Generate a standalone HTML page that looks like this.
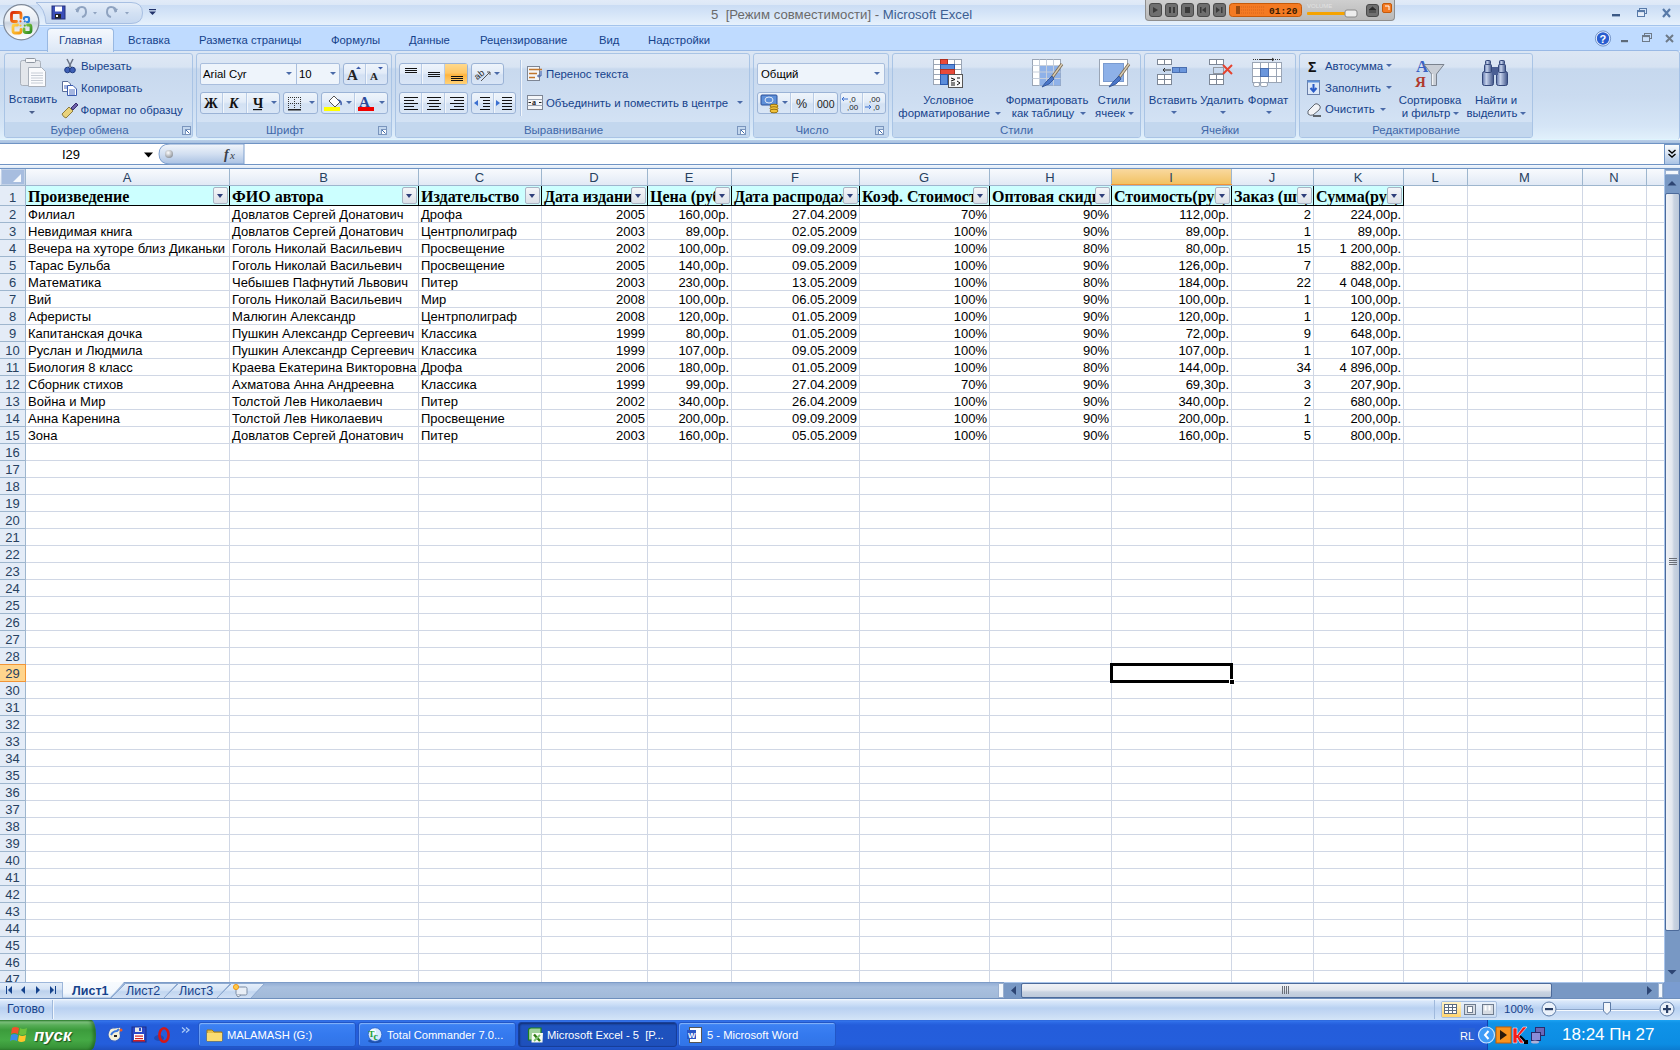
<!DOCTYPE html><html><head><meta charset="utf-8"><style>
html,body{margin:0;padding:0;width:1680px;height:1050px;overflow:hidden;background:#fff;}
body{position:relative;font-family:"Liberation Sans",sans-serif;}
div{box-sizing:border-box;}
svg{position:absolute;overflow:visible;}
</style></head><body>
<div style="position:absolute;left:0px;top:0px;width:1680px;height:26px;background:linear-gradient(#E2EBF8 0px,#DDE8F7 4.5px,#CADCF4 5px,#D3E3F7 12px,#E6F1FC 25px);"></div>
<div style="position:absolute;left:0px;top:25px;width:1680px;height:1px;background:#A4C4EC;"></div>
<div style="position:absolute;left:0px;top:26px;width:1680px;height:1px;background:#D5E7FD;"></div>
<div style="position:absolute;left:711px;top:7.5px;font:normal 13.2px/14px 'Liberation Sans', sans-serif;color:#6A6A6A;white-space:nowrap;">5&nbsp;&nbsp;[Режим совместимости]&nbsp;-&nbsp;<span style="color:#3D5F92">Microsoft Excel</span></div>
<div style="position:absolute;left:0px;top:27px;width:1680px;height:24px;background:#BFDBFF;"></div>
<div style="position:absolute;left:59px;top:32.5px;font:normal 11.3px/14px 'Liberation Sans', sans-serif;color:#15428B;white-space:nowrap;">Главная</div>
<div style="position:absolute;left:128px;top:32.5px;font:normal 11.3px/14px 'Liberation Sans', sans-serif;color:#15428B;white-space:nowrap;">Вставка</div>
<div style="position:absolute;left:199px;top:32.5px;font:normal 11.3px/14px 'Liberation Sans', sans-serif;color:#15428B;white-space:nowrap;">Разметка страницы</div>
<div style="position:absolute;left:331px;top:32.5px;font:normal 11.3px/14px 'Liberation Sans', sans-serif;color:#15428B;white-space:nowrap;">Формулы</div>
<div style="position:absolute;left:409px;top:32.5px;font:normal 11.3px/14px 'Liberation Sans', sans-serif;color:#15428B;white-space:nowrap;">Данные</div>
<div style="position:absolute;left:480px;top:32.5px;font:normal 11.3px/14px 'Liberation Sans', sans-serif;color:#15428B;white-space:nowrap;">Рецензирование</div>
<div style="position:absolute;left:599px;top:32.5px;font:normal 11.3px/14px 'Liberation Sans', sans-serif;color:#15428B;white-space:nowrap;">Вид</div>
<div style="position:absolute;left:648px;top:32.5px;font:normal 11.3px/14px 'Liberation Sans', sans-serif;color:#15428B;white-space:nowrap;">Надстройки</div>
<div style="position:absolute;left:0px;top:50px;width:1680px;height:90px;background:linear-gradient(#DBE6F4 0px,#D6E2F2 16px,#C6D8EE 18px,#CADBF0 45px,#D5E5F6 75px,#E2F1FC 89px);border-top:1px solid #99B9E5;border-right:1px solid #A6C2E6;border-radius:0 4px 4px 0;"></div>
<div style="position:absolute;left:0px;top:139px;width:1678px;height:1px;background:#DFF5FE;"></div>
<div style="position:absolute;left:47px;top:28px;width:67px;height:24px;background:linear-gradient(#F4F8FD,#E6EEF9 60%,#DCE7F5);border:1px solid #98B8E2;border-bottom:none;border-radius:4px 4px 0 0;"></div>
<div style="position:absolute;left:59px;top:32.5px;font:normal 11.3px/14px 'Liberation Sans', sans-serif;color:#15428B;white-space:nowrap;">Главная</div>
<div style="position:absolute;left:4px;top:53px;width:189px;height:85px;background:linear-gradient(#DFE8F5 0px,#D8E4F3 13px,#C8D9EE 15px,#CDDDF1 45px,#D3E2F4 68px);border:1px solid #A9C4E5;border-radius:3px;"></div>
<div style="position:absolute;left:5px;top:122px;width:187px;height:15px;background:#C3D7EE;border-radius:0 0 2px 2px;"></div>
<div style="position:absolute;left:4px;top:124px;width:171px;text-align:center;font:11.5px/13px 'Liberation Sans', sans-serif;color:#3F67A9;white-space:nowrap">Буфер обмена</div>
<div style="position:absolute;left:196px;top:53px;width:196px;height:85px;background:linear-gradient(#DFE8F5 0px,#D8E4F3 13px,#C8D9EE 15px,#CDDDF1 45px,#D3E2F4 68px);border:1px solid #A9C4E5;border-radius:3px;"></div>
<div style="position:absolute;left:197px;top:122px;width:194px;height:15px;background:#C3D7EE;border-radius:0 0 2px 2px;"></div>
<div style="position:absolute;left:196px;top:124px;width:178px;text-align:center;font:11.5px/13px 'Liberation Sans', sans-serif;color:#3F67A9;white-space:nowrap">Шрифт</div>
<div style="position:absolute;left:395px;top:53px;width:355px;height:85px;background:linear-gradient(#DFE8F5 0px,#D8E4F3 13px,#C8D9EE 15px,#CDDDF1 45px,#D3E2F4 68px);border:1px solid #A9C4E5;border-radius:3px;"></div>
<div style="position:absolute;left:396px;top:122px;width:353px;height:15px;background:#C3D7EE;border-radius:0 0 2px 2px;"></div>
<div style="position:absolute;left:395px;top:124px;width:337px;text-align:center;font:11.5px/13px 'Liberation Sans', sans-serif;color:#3F67A9;white-space:nowrap">Выравнивание</div>
<div style="position:absolute;left:753px;top:53px;width:136px;height:85px;background:linear-gradient(#DFE8F5 0px,#D8E4F3 13px,#C8D9EE 15px,#CDDDF1 45px,#D3E2F4 68px);border:1px solid #A9C4E5;border-radius:3px;"></div>
<div style="position:absolute;left:754px;top:122px;width:134px;height:15px;background:#C3D7EE;border-radius:0 0 2px 2px;"></div>
<div style="position:absolute;left:753px;top:124px;width:118px;text-align:center;font:11.5px/13px 'Liberation Sans', sans-serif;color:#3F67A9;white-space:nowrap">Число</div>
<div style="position:absolute;left:892px;top:53px;width:249px;height:85px;background:linear-gradient(#DFE8F5 0px,#D8E4F3 13px,#C8D9EE 15px,#CDDDF1 45px,#D3E2F4 68px);border:1px solid #A9C4E5;border-radius:3px;"></div>
<div style="position:absolute;left:893px;top:122px;width:247px;height:15px;background:#C3D7EE;border-radius:0 0 2px 2px;"></div>
<div style="position:absolute;left:892px;top:124px;width:249px;text-align:center;font:11.5px/13px 'Liberation Sans', sans-serif;color:#3F67A9;white-space:nowrap">Стили</div>
<div style="position:absolute;left:1144px;top:53px;width:152px;height:85px;background:linear-gradient(#DFE8F5 0px,#D8E4F3 13px,#C8D9EE 15px,#CDDDF1 45px,#D3E2F4 68px);border:1px solid #A9C4E5;border-radius:3px;"></div>
<div style="position:absolute;left:1145px;top:122px;width:150px;height:15px;background:#C3D7EE;border-radius:0 0 2px 2px;"></div>
<div style="position:absolute;left:1144px;top:124px;width:152px;text-align:center;font:11.5px/13px 'Liberation Sans', sans-serif;color:#3F67A9;white-space:nowrap">Ячейки</div>
<div style="position:absolute;left:1299px;top:53px;width:234px;height:85px;background:linear-gradient(#DFE8F5 0px,#D8E4F3 13px,#C8D9EE 15px,#CDDDF1 45px,#D3E2F4 68px);border:1px solid #A9C4E5;border-radius:3px;"></div>
<div style="position:absolute;left:1300px;top:122px;width:232px;height:15px;background:#C3D7EE;border-radius:0 0 2px 2px;"></div>
<div style="position:absolute;left:1299px;top:124px;width:234px;text-align:center;font:11.5px/13px 'Liberation Sans', sans-serif;color:#3F67A9;white-space:nowrap">Редактирование</div>
<svg style="left:18px;top:57px" width="30" height="32"><rect x="2.5" y="3.5" width="20" height="25" rx="2" fill="#E3E6EB" stroke="#A9B0BA"/><rect x="7.5" y="1.5" width="10" height="4" rx="1" fill="#F7F8FA" stroke="#8E96A1"/><path d="M10.5 10.5 H23.5 L27.5 14.5 V29.5 H10.5Z" fill="#FAFBFD" stroke="#A9B0BA"/><path d="M13 16 H25 M13 18.5 H25 M13 21 H25 M13 23.5 H25 M13 26 H25" stroke="#C6CCD5"/></svg>
<div style="position:absolute;left:-117px;top:94.35px;width:300px;text-align:center;font:normal 11.4px/11.4px 'Liberation Sans', sans-serif;color:#15428B;white-space:nowrap">Вставить</div>
<div style="position:absolute;left:29.0px;top:110.5px;width:0;height:0;border-left:3.0px solid transparent;border-right:3.0px solid transparent;border-top:3.5px solid #4A5F8C"></div>
<svg style="left:63px;top:58px" width="14" height="16"><path d="M4 1 L8 9 M10 1 L6 9" stroke="#6A7486" stroke-width="1.5"/><circle cx="4.5" cy="12" r="2.8" fill="#3D5FB5" stroke="#1E3A80"/><circle cx="9.5" cy="12" r="2.8" fill="#3D5FB5" stroke="#1E3A80"/></svg>
<div style="position:absolute;left:81px;top:61.35px;font:normal 11.4px/11.4px 'Liberation Sans', sans-serif;color:#15428B;white-space:nowrap">Вырезать</div>
<svg style="left:61px;top:80px" width="18" height="16"><path d="M1.5 1.5 H7 L9.5 4 V11.5 H1.5Z" fill="#fff" stroke="#5B6E99"/><path d="M6.5 5.5 H12 L15.5 9 V15.5 H6.5Z" fill="#fff" stroke="#3A5BB0"/><path d="M8 10 H14 M8 12 H14 M8 14 H14 M3 6 H6 M3 8 H6" stroke="#4A6CC0"/></svg>
<div style="position:absolute;left:81px;top:83.35px;font:normal 11.4px/11.4px 'Liberation Sans', sans-serif;color:#15428B;white-space:nowrap">Копировать</div>
<svg style="left:61px;top:102px" width="18" height="17"><path d="M1 12 L8 5 L12 9 L5 16 Q2 15 1 12Z" fill="#E9D27A" stroke="#8A7A40"/><path d="M10 6 L15 1 L17 3 L12 8Z" fill="#6B5FA8" stroke="#3A2F70"/></svg>
<div style="position:absolute;left:80.5px;top:104.85px;font:normal 11.4px/11.4px 'Liberation Sans', sans-serif;color:#15428B;white-space:nowrap">Формат по образцу</div>
<svg style="left:182px;top:126px" width="10" height="10"><rect x="0.5" y="0.5" width="8" height="8" fill="none" stroke="#7A95BD"/><rect x="3.5" y="3.5" width="5" height="5" fill="#fff" stroke="#7A95BD"/><path d="M4 4 L7.5 7.5" stroke="#3E6AAA"/></svg>
<div style="position:absolute;left:200px;top:63px;width:140px;height:22px;background:#EEF4FB;border:1px solid #A9BEDD;border-radius:2px"></div>
<div style="position:absolute;left:296px;top:64px;width:1px;height:20px;background:#A9BEDD"></div>
<div style="position:absolute;left:203px;top:69.35px;font:normal 11.4px/11.4px 'Liberation Sans', sans-serif;color:#000;white-space:nowrap">Arial Cyr</div>
<div style="position:absolute;left:299px;top:69.35px;font:normal 11.4px/11.4px 'Liberation Sans', sans-serif;color:#000;white-space:nowrap">10</div>
<div style="position:absolute;left:286.0px;top:72.0px;width:0;height:0;border-left:3.5px solid transparent;border-right:3.5px solid transparent;border-top:3.5px solid #4A6AA8"></div>
<div style="position:absolute;left:330.0px;top:72.0px;width:0;height:0;border-left:3.5px solid transparent;border-right:3.5px solid transparent;border-top:3.5px solid #4A6AA8"></div>
<div style="position:absolute;left:343px;top:63px;width:45px;height:22px;background:linear-gradient(#EEF4FB 0px,#E3ECF8 9px,#D3E1F3 11px,#DAE6F6 21px);border:1px solid #9BB3D6;border-radius:3px"></div>
<div style="position:absolute;left:365px;top:64px;width:1px;height:20px;background:#B9CCE6"></div>
<div style="position:absolute;left:366px;top:64px;width:1px;height:20px;background:#F3F7FC"></div>
<svg style="left:343px;top:63px" width="45" height="22"><text x="4" y="17" font-family="Liberation Serif" font-size="15" font-weight="bold" fill="#222">A</text><path d="M13 6 L15.5 3.5 L18 6Z" fill="#3B5BA8"/><text x="27" y="17" font-family="Liberation Serif" font-size="11" font-weight="bold" fill="#222">A</text><path d="M35 4 L37.5 6.5 L40 4Z" fill="#3B5BA8"/></svg>
<div style="position:absolute;left:200px;top:92px;width:80px;height:22px;background:linear-gradient(#EEF4FB 0px,#E3ECF8 9px,#D3E1F3 11px,#DAE6F6 21px);border:1px solid #9BB3D6;border-radius:3px"></div>
<div style="position:absolute;left:222px;top:93px;width:1px;height:20px;background:#B9CCE6"></div>
<div style="position:absolute;left:223px;top:93px;width:1px;height:20px;background:#F3F7FC"></div>
<div style="position:absolute;left:246px;top:93px;width:1px;height:20px;background:#B9CCE6"></div>
<div style="position:absolute;left:247px;top:93px;width:1px;height:20px;background:#F3F7FC"></div>
<svg style="left:200px;top:92px" width="80" height="22"><text x="4" y="16" font-family="Liberation Serif" font-size="14" font-weight="bold" fill="#111">Ж</text><text x="29" y="16" font-family="Liberation Serif" font-size="14" font-weight="bold" font-style="italic" fill="#111">К</text><text x="53" y="16" font-family="Liberation Serif" font-size="14" font-weight="bold" fill="#111">Ч</text><rect x="53" y="17" width="9" height="1.2" fill="#111"/></svg>
<div style="position:absolute;left:270.5px;top:101.0px;width:0;height:0;border-left:3.0px solid transparent;border-right:3.0px solid transparent;border-top:3.5px solid #4A6AA8"></div>
<div style="position:absolute;left:283px;top:92px;width:35px;height:22px;background:linear-gradient(#EEF4FB 0px,#E3ECF8 9px,#D3E1F3 11px,#DAE6F6 21px);border:1px solid #9BB3D6;border-radius:3px"></div>
<svg style="left:283px;top:92px" width="35" height="22"><path d="M5.5 5 V17 M11.5 5 V17 M17.5 5 V17 M5 5.5 H18 M5 11.5 H18" stroke="#333" stroke-dasharray="1 1" fill="none"/><rect x="5" y="17" width="13" height="1.5" fill="#222"/></svg>
<div style="position:absolute;left:308.5px;top:101.0px;width:0;height:0;border-left:3.0px solid transparent;border-right:3.0px solid transparent;border-top:3.5px solid #4A6AA8"></div>
<div style="position:absolute;left:321px;top:92px;width:67px;height:22px;background:linear-gradient(#EEF4FB 0px,#E3ECF8 9px,#D3E1F3 11px,#DAE6F6 21px);border:1px solid #9BB3D6;border-radius:3px"></div>
<div style="position:absolute;left:354px;top:93px;width:1px;height:20px;background:#B9CCE6"></div>
<div style="position:absolute;left:355px;top:93px;width:1px;height:20px;background:#F3F7FC"></div>
<svg style="left:321px;top:92px" width="67" height="22"><path d="M8 9 L13 4 L19 10 L14 15Z" fill="#fff" stroke="#555"/><path d="M17 8 Q21 9 20 13" stroke="#3B5BA8" stroke-width="1.5" fill="none"/><rect x="3" y="15" width="16" height="4" fill="#FFFF00"/><text x="38" y="14.5" font-family="Liberation Serif" font-size="15" font-weight="bold" fill="#2B4A9A">A</text><rect x="37" y="15" width="16" height="4" fill="#F00000"/></svg>
<div style="position:absolute;left:345.5px;top:101.0px;width:0;height:0;border-left:3.0px solid transparent;border-right:3.0px solid transparent;border-top:3.5px solid #4A6AA8"></div>
<div style="position:absolute;left:378.5px;top:101.0px;width:0;height:0;border-left:3.0px solid transparent;border-right:3.0px solid transparent;border-top:3.5px solid #4A6AA8"></div>
<svg style="left:378px;top:126px" width="10" height="10"><rect x="0.5" y="0.5" width="8" height="8" fill="none" stroke="#7A95BD"/><rect x="3.5" y="3.5" width="5" height="5" fill="#fff" stroke="#7A95BD"/><path d="M4 4 L7.5 7.5" stroke="#3E6AAA"/></svg>
<div style="position:absolute;left:399px;top:63px;width:69px;height:22px;background:linear-gradient(#EEF4FB 0px,#E3ECF8 9px,#D3E1F3 11px,#DAE6F6 21px);border:1px solid #9BB3D6;border-radius:3px"></div>
<div style="position:absolute;left:421px;top:64px;width:1px;height:20px;background:#B9CCE6"></div>
<div style="position:absolute;left:422px;top:64px;width:1px;height:20px;background:#F3F7FC"></div>
<div style="position:absolute;left:444px;top:64px;width:1px;height:20px;background:#B9CCE6"></div>
<div style="position:absolute;left:445px;top:64px;width:1px;height:20px;background:#F3F7FC"></div>
<div style="position:absolute;left:445px;top:64px;width:22px;height:20px;background:linear-gradient(#FFD98C 0px,#FFC766 9px,#FFB43D 11px,#FFD27A 20px)"></div>
<svg style="left:399px;top:63px" width="70" height="22"><path d="M6 5.5 H18 M6 7.5 H18 M6 9.5 H18" stroke="#111"/><path d="M29 9.5 H41 M29 11.5 H41 M29 13.5 H41" stroke="#111"/><path d="M52 13.5 H64 M52 15.5 H64 M52 17.5 H64" stroke="#111"/></svg>
<div style="position:absolute;left:471px;top:63px;width:33px;height:22px;background:linear-gradient(#EEF4FB 0px,#E3ECF8 9px,#D3E1F3 11px,#DAE6F6 21px);border:1px solid #9BB3D6;border-radius:3px"></div>
<svg style="left:471px;top:63px" width="33" height="22"><text x="3" y="14" font-family="Liberation Sans" font-size="9" fill="#222" transform="rotate(-40 9 11)">ab</text><path d="M10 18 L19 9 M16 9 H19 V12" stroke="#555" fill="none"/></svg>
<div style="position:absolute;left:493.5px;top:72.0px;width:0;height:0;border-left:3.0px solid transparent;border-right:3.0px solid transparent;border-top:3.5px solid #4A6AA8"></div>
<div style="position:absolute;left:399px;top:92px;width:69px;height:22px;background:linear-gradient(#EEF4FB 0px,#E3ECF8 9px,#D3E1F3 11px,#DAE6F6 21px);border:1px solid #9BB3D6;border-radius:3px"></div>
<div style="position:absolute;left:421px;top:93px;width:1px;height:20px;background:#B9CCE6"></div>
<div style="position:absolute;left:422px;top:93px;width:1px;height:20px;background:#F3F7FC"></div>
<div style="position:absolute;left:444px;top:93px;width:1px;height:20px;background:#B9CCE6"></div>
<div style="position:absolute;left:445px;top:93px;width:1px;height:20px;background:#F3F7FC"></div>
<svg style="left:399px;top:92px" width="70" height="22"><path d="M5 5.5 H19 M5 8.5 H15 M5 11.5 H19 M5 14.5 H15 M5 17.5 H19" stroke="#111" stroke-width="1.2"/><path d="M28 5.5 H42 M30 8.5 H40 M28 11.5 H42 M30 14.5 H40 M28 17.5 H42" stroke="#111" stroke-width="1.2"/><path d="M51 5.5 H65 M55 8.5 H65 M51 11.5 H65 M55 14.5 H65 M51 17.5 H65" stroke="#111" stroke-width="1.2"/></svg>
<div style="position:absolute;left:471px;top:92px;width:45px;height:22px;background:linear-gradient(#EEF4FB 0px,#E3ECF8 9px,#D3E1F3 11px,#DAE6F6 21px);border:1px solid #9BB3D6;border-radius:3px"></div>
<div style="position:absolute;left:493px;top:93px;width:1px;height:20px;background:#B9CCE6"></div>
<div style="position:absolute;left:494px;top:93px;width:1px;height:20px;background:#F3F7FC"></div>
<svg style="left:471px;top:92px" width="45" height="22"><path d="M9 5.5 H19 M12 8.5 H19 M12 11.5 H19 M12 14.5 H19 M9 17.5 H19" stroke="#111" stroke-width="1.2"/><path d="M3 11 L7 8 L7 14Z" fill="#3B6FD0"/><path d="M31 5.5 H41 M31 8.5 H41 M31 11.5 H41 M31 14.5 H41 M31 17.5 H41" stroke="#111" stroke-width="1.2"/><path d="M29 11 L25 8 L25 14Z" fill="#3B6FD0"/></svg>
<div style="position:absolute;left:520px;top:60px;width:1px;height:56px;background:#AFC4E2"></div>
<div style="position:absolute;left:521px;top:60px;width:1px;height:56px;background:#F2F6FB"></div>
<svg style="left:526px;top:65px" width="18" height="18"><rect x="1.5" y="1.5" width="12" height="14" fill="#F4F6F9" stroke="#7D8594"/><path d="M3 4.5 H16 M3 8.5 H11 M3 12.5 H9" stroke="#C0762E" stroke-width="1.3"/><path d="M15 6 V11 H12 M13 9.5 L11.5 11 L13 12.5" stroke="#3B5BA8" fill="none"/></svg>
<div style="position:absolute;left:546px;top:69.35px;font:normal 11.4px/11.4px 'Liberation Sans', sans-serif;color:#15428B;white-space:nowrap">Перенос текста</div>
<svg style="left:526px;top:94px" width="18" height="18"><rect x="1.5" y="1.5" width="15" height="14" fill="#F4F6F9" stroke="#7D8594"/><path d="M1.5 5.5 H16.5 M1.5 11.5 H16.5" stroke="#9BA4B3"/><text x="6" y="11" font-family="Liberation Serif" font-size="8" font-weight="bold" fill="#222">a</text><path d="M2.5 8.5 H5 M13 8.5 H15.5" stroke="#222"/></svg>
<div style="position:absolute;left:546px;top:98.35px;font:normal 11.4px/11.4px 'Liberation Sans', sans-serif;color:#15428B;white-space:nowrap">Объединить и поместить в центре</div>
<div style="position:absolute;left:736.5px;top:101.0px;width:0;height:0;border-left:3.0px solid transparent;border-right:3.0px solid transparent;border-top:3.5px solid #4A6AA8"></div>
<svg style="left:737px;top:126px" width="10" height="10"><rect x="0.5" y="0.5" width="8" height="8" fill="none" stroke="#7A95BD"/><rect x="3.5" y="3.5" width="5" height="5" fill="#fff" stroke="#7A95BD"/><path d="M4 4 L7.5 7.5" stroke="#3E6AAA"/></svg>
<div style="position:absolute;left:757px;top:63px;width:128px;height:22px;background:#EEF4FB;border:1px solid #A9BEDD;border-radius:2px"></div>
<div style="position:absolute;left:761px;top:69.35px;font:normal 11.4px/11.4px 'Liberation Sans', sans-serif;color:#000;white-space:nowrap">Общий</div>
<div style="position:absolute;left:874.0px;top:72.0px;width:0;height:0;border-left:3.5px solid transparent;border-right:3.5px solid transparent;border-top:3.5px solid #4A6AA8"></div>
<div style="position:absolute;left:757px;top:92px;width:81px;height:22px;background:linear-gradient(#EEF4FB 0px,#E3ECF8 9px,#D3E1F3 11px,#DAE6F6 21px);border:1px solid #9BB3D6;border-radius:3px"></div>
<div style="position:absolute;left:790px;top:93px;width:1px;height:20px;background:#B9CCE6"></div>
<div style="position:absolute;left:791px;top:93px;width:1px;height:20px;background:#F3F7FC"></div>
<div style="position:absolute;left:813px;top:93px;width:1px;height:20px;background:#B9CCE6"></div>
<div style="position:absolute;left:814px;top:93px;width:1px;height:20px;background:#F3F7FC"></div>
<svg style="left:757px;top:92px" width="82" height="22"><rect x="4" y="3" width="16" height="10" rx="1" fill="#5D8FD8" stroke="#2B4F98"/><ellipse cx="12" cy="8" rx="4" ry="3" fill="none" stroke="#DDE8F8"/><ellipse cx="17" cy="14" rx="4" ry="1.8" fill="#F2C23A" stroke="#9A7410"/><ellipse cx="17" cy="16.5" rx="4" ry="1.8" fill="#F2C23A" stroke="#9A7410"/><ellipse cx="17" cy="19" rx="4" ry="1.8" fill="#F2C23A" stroke="#9A7410"/><text x="39" y="16" font-family="Liberation Sans" font-size="12.5" fill="#222">%</text><text x="60" y="16" font-family="Liberation Sans" font-size="10.5" fill="#222">000</text></svg>
<div style="position:absolute;left:781.5px;top:101.0px;width:0;height:0;border-left:3.0px solid transparent;border-right:3.0px solid transparent;border-top:3.5px solid #4A6AA8"></div>
<div style="position:absolute;left:840px;top:92px;width:46px;height:22px;background:linear-gradient(#EEF4FB 0px,#E3ECF8 9px,#D3E1F3 11px,#DAE6F6 21px);border:1px solid #9BB3D6;border-radius:3px"></div>
<div style="position:absolute;left:862px;top:93px;width:1px;height:20px;background:#B9CCE6"></div>
<div style="position:absolute;left:863px;top:93px;width:1px;height:20px;background:#F3F7FC"></div>
<svg style="left:840px;top:92px" width="46" height="22"><text x="9" y="10" font-family="Liberation Sans" font-size="8" fill="#222">,0</text><text x="7" y="18" font-family="Liberation Sans" font-size="8" fill="#222">,00</text><path d="M2 7 H8 M4 5 L2 7 L4 9" stroke="#3B6FD0" fill="none"/><text x="29" y="10" font-family="Liberation Sans" font-size="8" fill="#222">,00</text><text x="33" y="18" font-family="Liberation Sans" font-size="8" fill="#222">,0</text><path d="M25 15 H31 M29 13 L31 15 L29 17" stroke="#3B6FD0" fill="none"/></svg>
<svg style="left:875px;top:126px" width="10" height="10"><rect x="0.5" y="0.5" width="8" height="8" fill="none" stroke="#7A95BD"/><rect x="3.5" y="3.5" width="5" height="5" fill="#fff" stroke="#7A95BD"/><path d="M4 4 L7.5 7.5" stroke="#3E6AAA"/></svg>
<svg style="left:933px;top:59px" width="34" height="32"><g stroke="#9AA5B5" fill="#fff"><rect x="0.5" y="0.5" width="7" height="5"/><rect x="7.5" y="0.5" width="7" height="5"/><rect x="14.5" y="0.5" width="7" height="5"/><rect x="21.5" y="0.5" width="7" height="5"/><rect x="0.5" y="5.5" width="7" height="5"/><rect x="21.5" y="5.5" width="7" height="5"/><rect x="0.5" y="10.5" width="7" height="5"/><rect x="21.5" y="10.5" width="7" height="5"/><rect x="0.5" y="15.5" width="7" height="5"/><rect x="0.5" y="20.5" width="7" height="5"/><rect x="14.5" y="20.5" width="7" height="5"/></g><rect x="7.5" y="0.5" width="7" height="5" fill="#E84A3A" stroke="#B03020"/><rect x="7.5" y="5.5" width="14" height="5" fill="#5B8DDB" stroke="#2E5BAE"/><rect x="7.5" y="10.5" width="14" height="5" fill="#E84A3A" stroke="#B03020"/><rect x="7.5" y="15.5" width="7" height="10" fill="#5B8DDB" stroke="#2E5BAE"/><rect x="15.5" y="15.5" width="14" height="13" fill="#F8F8F8" stroke="#555"/><path d="M18 19 L22 20.5 L18 22 M18 24 H22 M18 26 H22 M24 19 L27 19 M24 22 L27 24 L24 26" stroke="#111" fill="none"/></svg>
<div style="position:absolute;left:798.5px;top:95.35px;width:300px;text-align:center;font:normal 11.4px/11.4px 'Liberation Sans', sans-serif;color:#15428B;white-space:nowrap">Условное</div>
<div style="position:absolute;left:794px;top:108.35px;width:300px;text-align:center;font:normal 11.4px/11.4px 'Liberation Sans', sans-serif;color:#15428B;white-space:nowrap">форматирование</div>
<div style="position:absolute;left:994.5px;top:112.0px;width:0;height:0;border-left:3.0px solid transparent;border-right:3.0px solid transparent;border-top:3.5px solid #4A6AA8"></div>
<svg style="left:1032px;top:59px" width="32" height="32"><g stroke="#9AA5B5" fill="#fff"><rect x="0.5" y="0.5" width="28" height="26"/></g><rect x="7.5" y="6.5" width="21" height="20" fill="#8EB1E8"/><path d="M0.5 6.5 H28.5 M0.5 13 H28.5 M0.5 19.5 H28.5 M7.5 0.5 V26.5 M14.5 0.5 V26.5 M21.5 0.5 V26.5" stroke="#C5CEDB"/><path d="M30 5 L19 20" stroke="#7A6A50" stroke-width="3"/><path d="M30 5 L19 20" stroke="#D9CDB5" stroke-width="1.4"/><path d="M20 17 L14 23 L10 28 L17 25 L22 20Z" fill="#4A76C8" stroke="#2A4C90" stroke-width="0.8"/></svg>
<div style="position:absolute;left:897px;top:95.35px;width:300px;text-align:center;font:normal 11.4px/11.4px 'Liberation Sans', sans-serif;color:#15428B;white-space:nowrap">Форматировать</div>
<div style="position:absolute;left:893px;top:108.35px;width:300px;text-align:center;font:normal 11.4px/11.4px 'Liberation Sans', sans-serif;color:#15428B;white-space:nowrap">как таблицу</div>
<div style="position:absolute;left:1079.5px;top:112.0px;width:0;height:0;border-left:3.0px solid transparent;border-right:3.0px solid transparent;border-top:3.5px solid #4A6AA8"></div>
<svg style="left:1099px;top:59px" width="32" height="32"><rect x="0.5" y="0.5" width="28" height="26" fill="#fff" stroke="#9AA5B5"/><rect x="4.5" y="4.5" width="20" height="18" fill="#8EB1E8" stroke="#7A9BD0"/><path d="M30 5 L19 20" stroke="#7A6A50" stroke-width="3"/><path d="M30 5 L19 20" stroke="#D9CDB5" stroke-width="1.4"/><path d="M20 17 L14 23 L10 28 L17 25 L22 20Z" fill="#4A76C8" stroke="#2A4C90" stroke-width="0.8"/></svg>
<div style="position:absolute;left:964px;top:95.35px;width:300px;text-align:center;font:normal 11.4px/11.4px 'Liberation Sans', sans-serif;color:#15428B;white-space:nowrap">Стили</div>
<div style="position:absolute;left:960px;top:108.35px;width:300px;text-align:center;font:normal 11.4px/11.4px 'Liberation Sans', sans-serif;color:#15428B;white-space:nowrap">ячеек</div>
<div style="position:absolute;left:1127.5px;top:112.0px;width:0;height:0;border-left:3.0px solid transparent;border-right:3.0px solid transparent;border-top:3.5px solid #4A6AA8"></div>
<svg style="left:1157px;top:59px" width="34" height="30"><g fill="#fff" stroke="#7D8796"><rect x="0.5" y="0.5" width="7" height="5"/><rect x="7.5" y="0.5" width="7" height="5"/><rect x="0.5" y="20.5" width="7" height="5"/><rect x="7.5" y="20.5" width="7" height="5"/><rect x="0.5" y="15.5" width="7" height="5"/><rect x="7.5" y="15.5" width="7" height="5"/></g><g fill="#6A96DC" stroke="#4A6FB0"><rect x="15.5" y="8.5" width="7" height="5"/><rect x="22.5" y="8.5" width="7" height="5"/></g><path d="M6 11 H14 M8 9 L6 11 L8 13" stroke="#333" fill="none"/></svg>
<div style="position:absolute;left:1023px;top:95.35px;width:300px;text-align:center;font:normal 11.4px/11.4px 'Liberation Sans', sans-serif;color:#15428B;white-space:nowrap">Вставить</div>
<div style="position:absolute;left:1170.5px;top:111.0px;width:0;height:0;border-left:3.0px solid transparent;border-right:3.0px solid transparent;border-top:3.5px solid #4A6AA8"></div>
<svg style="left:1209px;top:59px" width="30" height="30"><g fill="#fff" stroke="#7D8796"><rect x="0.5" y="0.5" width="7" height="5"/><rect x="7.5" y="0.5" width="7" height="5"/><rect x="0.5" y="15.5" width="7" height="5"/><rect x="7.5" y="15.5" width="7" height="5"/><rect x="0.5" y="20.5" width="7" height="5"/><rect x="7.5" y="20.5" width="7" height="5"/></g><rect x="4.5" y="8.5" width="10" height="6" fill="none" stroke="#555" stroke-dasharray="1 1"/><path d="M14 6 L23 15 M23 6 L14 15" stroke="#E5432F" stroke-width="2"/></svg>
<div style="position:absolute;left:1072px;top:95.35px;width:300px;text-align:center;font:normal 11.4px/11.4px 'Liberation Sans', sans-serif;color:#15428B;white-space:nowrap">Удалить</div>
<div style="position:absolute;left:1219.5px;top:111.0px;width:0;height:0;border-left:3.0px solid transparent;border-right:3.0px solid transparent;border-top:3.5px solid #4A6AA8"></div>
<svg style="left:1252px;top:58px" width="34" height="32"><path d="M1 1.5 H29" stroke="#333" stroke-dasharray="1 1"/><path d="M8 1.5 H22 M20 0 L22 1.5 L20 3" stroke="#333" fill="none"/><g fill="#fff" stroke="#9AA5B5"><rect x="0.5" y="4.5" width="8" height="6"/><rect x="8.5" y="4.5" width="8" height="6"/><rect x="16.5" y="4.5" width="8" height="6"/><rect x="24.5" y="4.5" width="5" height="6"/><rect x="0.5" y="10.5" width="8" height="8"/><rect x="16.5" y="10.5" width="8" height="8"/><rect x="24.5" y="10.5" width="5" height="8"/><rect x="0.5" y="18.5" width="8" height="6"/><rect x="8.5" y="18.5" width="8" height="6"/><rect x="16.5" y="18.5" width="8" height="6"/><rect x="24.5" y="18.5" width="5" height="6"/><rect x="1.5" y="24.5" width="6" height="4" rx="1.5"/><rect x="8.5" y="24.5" width="7" height="4" rx="1.5"/></g><rect x="8.5" y="10.5" width="8" height="8" fill="#6A96DC" stroke="#4A6FB0"/></svg>
<div style="position:absolute;left:1118px;top:95.35px;width:300px;text-align:center;font:normal 11.4px/11.4px 'Liberation Sans', sans-serif;color:#15428B;white-space:nowrap">Формат</div>
<div style="position:absolute;left:1265.5px;top:111.0px;width:0;height:0;border-left:3.0px solid transparent;border-right:3.0px solid transparent;border-top:3.5px solid #4A6AA8"></div>
<div style="position:absolute;left:1308px;top:60.15px;font:bold 14px/14px 'Liberation Sans', sans-serif;color:#111;white-space:nowrap">Σ</div>
<div style="position:absolute;left:1325px;top:61.35px;font:normal 11.4px/11.4px 'Liberation Sans', sans-serif;color:#15428B;white-space:nowrap">Автосумма</div>
<div style="position:absolute;left:1385.5px;top:64.0px;width:0;height:0;border-left:3.0px solid transparent;border-right:3.0px solid transparent;border-top:3.5px solid #4A6AA8"></div>
<svg style="left:1306px;top:79px" width="16" height="18"><rect x="1.5" y="1.5" width="12" height="14" fill="#DDE8F8" stroke="#6A7FA8"/><rect x="1.5" y="1.5" width="12" height="2" fill="#5D8FD8"/><path d="M7.5 5 V12 M4.5 9 L7.5 12.5 L10.5 9" stroke="#2A5BC8" stroke-width="2" fill="none"/></svg>
<div style="position:absolute;left:1325px;top:83.35px;font:normal 11.4px/11.4px 'Liberation Sans', sans-serif;color:#15428B;white-space:nowrap">Заполнить</div>
<div style="position:absolute;left:1385.5px;top:86.0px;width:0;height:0;border-left:3.0px solid transparent;border-right:3.0px solid transparent;border-top:3.5px solid #4A6AA8"></div>
<svg style="left:1306px;top:100px" width="18" height="18"><path d="M2 11 L9 4 Q11 3 13 5 L14 6 Q15 8 13 10 L7 15 Q4 16 2 14Z" fill="#F2F3F6" stroke="#5F6670"/><path d="M7 16 H15" stroke="#111" stroke-width="1.2"/></svg>
<div style="position:absolute;left:1325px;top:104.35px;font:normal 11.4px/11.4px 'Liberation Sans', sans-serif;color:#15428B;white-space:nowrap">Очистить</div>
<div style="position:absolute;left:1379.5px;top:108.0px;width:0;height:0;border-left:3.0px solid transparent;border-right:3.0px solid transparent;border-top:3.5px solid #4A6AA8"></div>
<svg style="left:1413px;top:57px" width="34" height="34"><text x="3" y="15" font-family="Liberation Serif" font-size="17" font-weight="bold" fill="#3A63C4">A</text><text x="2" y="30" font-family="Liberation Serif" font-size="15" font-weight="bold" fill="#B03A2E">Я</text><path d="M11 7.5 H31 L23.5 17 V28.5 H18.5 V17Z" fill="#C9CED6" stroke="#7A828E"/><path d="M19.5 17 V28" stroke="#F2F4F7" stroke-width="1.5"/></svg>
<div style="position:absolute;left:1280px;top:95.35px;width:300px;text-align:center;font:normal 11.4px/11.4px 'Liberation Sans', sans-serif;color:#15428B;white-space:nowrap">Сортировка</div>
<div style="position:absolute;left:1276px;top:108.35px;width:300px;text-align:center;font:normal 11.4px/11.4px 'Liberation Sans', sans-serif;color:#15428B;white-space:nowrap">и фильтр</div>
<div style="position:absolute;left:1452.5px;top:112.0px;width:0;height:0;border-left:3.0px solid transparent;border-right:3.0px solid transparent;border-top:3.5px solid #4A6AA8"></div>
<svg style="left:1480px;top:58px" width="34" height="30"><defs><linearGradient id="bino" x1="0" y1="0" x2="1" y2="0"><stop offset="0" stop-color="#5A70A6"/><stop offset="0.35" stop-color="#C6D3EC"/><stop offset="1" stop-color="#3F5488"/></linearGradient></defs><rect x="2.5" y="13.5" width="11" height="14" rx="2" fill="url(#bino)" stroke="#34487A"/><rect x="16.5" y="13.5" width="11" height="14" rx="2" fill="url(#bino)" stroke="#34487A"/><rect x="4.5" y="6.5" width="7" height="8" rx="1" fill="url(#bino)" stroke="#34487A"/><rect x="18.5" y="6.5" width="7" height="8" rx="1" fill="url(#bino)" stroke="#34487A"/><rect x="5.5" y="2.5" width="5" height="4" rx="1" fill="url(#bino)" stroke="#34487A"/><rect x="19.5" y="2.5" width="5" height="4" rx="1" fill="url(#bino)" stroke="#34487A"/><rect x="12" y="9" width="6" height="8" fill="#4A5F94"/></svg>
<div style="position:absolute;left:1346px;top:95.35px;width:300px;text-align:center;font:normal 11.4px/11.4px 'Liberation Sans', sans-serif;color:#15428B;white-space:nowrap">Найти и</div>
<div style="position:absolute;left:1342px;top:108.35px;width:300px;text-align:center;font:normal 11.4px/11.4px 'Liberation Sans', sans-serif;color:#15428B;white-space:nowrap">выделить</div>
<div style="position:absolute;left:1519.5px;top:112.0px;width:0;height:0;border-left:3.0px solid transparent;border-right:3.0px solid transparent;border-top:3.5px solid #4A6AA8"></div>
<div style="position:absolute;left:0px;top:140px;width:1680px;height:3px;background:linear-gradient(#B9CEE8,#A9C1E0);"></div>
<div style="position:absolute;left:0px;top:143px;width:1680px;height:1px;background:#7094C4;"></div>
<div style="position:absolute;left:0px;top:144px;width:1664px;height:20px;background:#fff;"></div>
<div style="position:absolute;left:1664px;top:144px;width:16px;height:20px;background:#7094C4;"></div>
<div style="position:absolute;left:0px;top:164px;width:1680px;height:1px;background:#7094C4;"></div>
<div style="position:absolute;left:0px;top:165px;width:1680px;height:3px;background:linear-gradient(#F4F8FD,#DCE8F6);"></div>
<div style="position:absolute;left:0px;top:168px;width:1680px;height:1px;background:#7094C4;"></div>
<div style="position:absolute;left:0px;top:169px;width:1664px;height:16px;background:linear-gradient(#F8FAFD 0px,#EDF2F9 8px,#E1E9F5 16px);"></div>
<div style="position:absolute;left:0px;top:185px;width:1664px;height:1px;background:#9EB6CE;"></div>
<div style="position:absolute;left:0px;top:186px;width:25px;height:796px;background:#E4ECF7;"></div>
<div style="position:absolute;left:25px;top:186px;width:1639px;height:796px;background:#fff;"></div>
<div style="position:absolute;left:26px;top:186px;width:1377px;height:19px;background:#CCFFFF;"></div>
<div style="position:absolute;left:25px;top:205px;width:1639px;height:1px;background:#D0D7E5;"></div>
<div style="position:absolute;left:0px;top:205px;width:25px;height:1px;background:#9EB6CE;"></div>
<div style="position:absolute;left:25px;top:222px;width:1639px;height:1px;background:#D0D7E5;"></div>
<div style="position:absolute;left:0px;top:222px;width:25px;height:1px;background:#9EB6CE;"></div>
<div style="position:absolute;left:25px;top:239px;width:1639px;height:1px;background:#D0D7E5;"></div>
<div style="position:absolute;left:0px;top:239px;width:25px;height:1px;background:#9EB6CE;"></div>
<div style="position:absolute;left:25px;top:256px;width:1639px;height:1px;background:#D0D7E5;"></div>
<div style="position:absolute;left:0px;top:256px;width:25px;height:1px;background:#9EB6CE;"></div>
<div style="position:absolute;left:25px;top:273px;width:1639px;height:1px;background:#D0D7E5;"></div>
<div style="position:absolute;left:0px;top:273px;width:25px;height:1px;background:#9EB6CE;"></div>
<div style="position:absolute;left:25px;top:290px;width:1639px;height:1px;background:#D0D7E5;"></div>
<div style="position:absolute;left:0px;top:290px;width:25px;height:1px;background:#9EB6CE;"></div>
<div style="position:absolute;left:25px;top:307px;width:1639px;height:1px;background:#D0D7E5;"></div>
<div style="position:absolute;left:0px;top:307px;width:25px;height:1px;background:#9EB6CE;"></div>
<div style="position:absolute;left:25px;top:324px;width:1639px;height:1px;background:#D0D7E5;"></div>
<div style="position:absolute;left:0px;top:324px;width:25px;height:1px;background:#9EB6CE;"></div>
<div style="position:absolute;left:25px;top:341px;width:1639px;height:1px;background:#D0D7E5;"></div>
<div style="position:absolute;left:0px;top:341px;width:25px;height:1px;background:#9EB6CE;"></div>
<div style="position:absolute;left:25px;top:358px;width:1639px;height:1px;background:#D0D7E5;"></div>
<div style="position:absolute;left:0px;top:358px;width:25px;height:1px;background:#9EB6CE;"></div>
<div style="position:absolute;left:25px;top:375px;width:1639px;height:1px;background:#D0D7E5;"></div>
<div style="position:absolute;left:0px;top:375px;width:25px;height:1px;background:#9EB6CE;"></div>
<div style="position:absolute;left:25px;top:392px;width:1639px;height:1px;background:#D0D7E5;"></div>
<div style="position:absolute;left:0px;top:392px;width:25px;height:1px;background:#9EB6CE;"></div>
<div style="position:absolute;left:25px;top:409px;width:1639px;height:1px;background:#D0D7E5;"></div>
<div style="position:absolute;left:0px;top:409px;width:25px;height:1px;background:#9EB6CE;"></div>
<div style="position:absolute;left:25px;top:426px;width:1639px;height:1px;background:#D0D7E5;"></div>
<div style="position:absolute;left:0px;top:426px;width:25px;height:1px;background:#9EB6CE;"></div>
<div style="position:absolute;left:25px;top:443px;width:1639px;height:1px;background:#D0D7E5;"></div>
<div style="position:absolute;left:0px;top:443px;width:25px;height:1px;background:#9EB6CE;"></div>
<div style="position:absolute;left:25px;top:460px;width:1639px;height:1px;background:#D0D7E5;"></div>
<div style="position:absolute;left:0px;top:460px;width:25px;height:1px;background:#9EB6CE;"></div>
<div style="position:absolute;left:25px;top:477px;width:1639px;height:1px;background:#D0D7E5;"></div>
<div style="position:absolute;left:0px;top:477px;width:25px;height:1px;background:#9EB6CE;"></div>
<div style="position:absolute;left:25px;top:494px;width:1639px;height:1px;background:#D0D7E5;"></div>
<div style="position:absolute;left:0px;top:494px;width:25px;height:1px;background:#9EB6CE;"></div>
<div style="position:absolute;left:25px;top:511px;width:1639px;height:1px;background:#D0D7E5;"></div>
<div style="position:absolute;left:0px;top:511px;width:25px;height:1px;background:#9EB6CE;"></div>
<div style="position:absolute;left:25px;top:528px;width:1639px;height:1px;background:#D0D7E5;"></div>
<div style="position:absolute;left:0px;top:528px;width:25px;height:1px;background:#9EB6CE;"></div>
<div style="position:absolute;left:25px;top:545px;width:1639px;height:1px;background:#D0D7E5;"></div>
<div style="position:absolute;left:0px;top:545px;width:25px;height:1px;background:#9EB6CE;"></div>
<div style="position:absolute;left:25px;top:562px;width:1639px;height:1px;background:#D0D7E5;"></div>
<div style="position:absolute;left:0px;top:562px;width:25px;height:1px;background:#9EB6CE;"></div>
<div style="position:absolute;left:25px;top:579px;width:1639px;height:1px;background:#D0D7E5;"></div>
<div style="position:absolute;left:0px;top:579px;width:25px;height:1px;background:#9EB6CE;"></div>
<div style="position:absolute;left:25px;top:596px;width:1639px;height:1px;background:#D0D7E5;"></div>
<div style="position:absolute;left:0px;top:596px;width:25px;height:1px;background:#9EB6CE;"></div>
<div style="position:absolute;left:25px;top:613px;width:1639px;height:1px;background:#D0D7E5;"></div>
<div style="position:absolute;left:0px;top:613px;width:25px;height:1px;background:#9EB6CE;"></div>
<div style="position:absolute;left:25px;top:630px;width:1639px;height:1px;background:#D0D7E5;"></div>
<div style="position:absolute;left:0px;top:630px;width:25px;height:1px;background:#9EB6CE;"></div>
<div style="position:absolute;left:25px;top:647px;width:1639px;height:1px;background:#D0D7E5;"></div>
<div style="position:absolute;left:0px;top:647px;width:25px;height:1px;background:#9EB6CE;"></div>
<div style="position:absolute;left:25px;top:664px;width:1639px;height:1px;background:#D0D7E5;"></div>
<div style="position:absolute;left:0px;top:664px;width:25px;height:1px;background:#9EB6CE;"></div>
<div style="position:absolute;left:25px;top:681px;width:1639px;height:1px;background:#D0D7E5;"></div>
<div style="position:absolute;left:0px;top:681px;width:25px;height:1px;background:#9EB6CE;"></div>
<div style="position:absolute;left:25px;top:698px;width:1639px;height:1px;background:#D0D7E5;"></div>
<div style="position:absolute;left:0px;top:698px;width:25px;height:1px;background:#9EB6CE;"></div>
<div style="position:absolute;left:25px;top:715px;width:1639px;height:1px;background:#D0D7E5;"></div>
<div style="position:absolute;left:0px;top:715px;width:25px;height:1px;background:#9EB6CE;"></div>
<div style="position:absolute;left:25px;top:732px;width:1639px;height:1px;background:#D0D7E5;"></div>
<div style="position:absolute;left:0px;top:732px;width:25px;height:1px;background:#9EB6CE;"></div>
<div style="position:absolute;left:25px;top:749px;width:1639px;height:1px;background:#D0D7E5;"></div>
<div style="position:absolute;left:0px;top:749px;width:25px;height:1px;background:#9EB6CE;"></div>
<div style="position:absolute;left:25px;top:766px;width:1639px;height:1px;background:#D0D7E5;"></div>
<div style="position:absolute;left:0px;top:766px;width:25px;height:1px;background:#9EB6CE;"></div>
<div style="position:absolute;left:25px;top:783px;width:1639px;height:1px;background:#D0D7E5;"></div>
<div style="position:absolute;left:0px;top:783px;width:25px;height:1px;background:#9EB6CE;"></div>
<div style="position:absolute;left:25px;top:800px;width:1639px;height:1px;background:#D0D7E5;"></div>
<div style="position:absolute;left:0px;top:800px;width:25px;height:1px;background:#9EB6CE;"></div>
<div style="position:absolute;left:25px;top:817px;width:1639px;height:1px;background:#D0D7E5;"></div>
<div style="position:absolute;left:0px;top:817px;width:25px;height:1px;background:#9EB6CE;"></div>
<div style="position:absolute;left:25px;top:834px;width:1639px;height:1px;background:#D0D7E5;"></div>
<div style="position:absolute;left:0px;top:834px;width:25px;height:1px;background:#9EB6CE;"></div>
<div style="position:absolute;left:25px;top:851px;width:1639px;height:1px;background:#D0D7E5;"></div>
<div style="position:absolute;left:0px;top:851px;width:25px;height:1px;background:#9EB6CE;"></div>
<div style="position:absolute;left:25px;top:868px;width:1639px;height:1px;background:#D0D7E5;"></div>
<div style="position:absolute;left:0px;top:868px;width:25px;height:1px;background:#9EB6CE;"></div>
<div style="position:absolute;left:25px;top:885px;width:1639px;height:1px;background:#D0D7E5;"></div>
<div style="position:absolute;left:0px;top:885px;width:25px;height:1px;background:#9EB6CE;"></div>
<div style="position:absolute;left:25px;top:902px;width:1639px;height:1px;background:#D0D7E5;"></div>
<div style="position:absolute;left:0px;top:902px;width:25px;height:1px;background:#9EB6CE;"></div>
<div style="position:absolute;left:25px;top:919px;width:1639px;height:1px;background:#D0D7E5;"></div>
<div style="position:absolute;left:0px;top:919px;width:25px;height:1px;background:#9EB6CE;"></div>
<div style="position:absolute;left:25px;top:936px;width:1639px;height:1px;background:#D0D7E5;"></div>
<div style="position:absolute;left:0px;top:936px;width:25px;height:1px;background:#9EB6CE;"></div>
<div style="position:absolute;left:25px;top:953px;width:1639px;height:1px;background:#D0D7E5;"></div>
<div style="position:absolute;left:0px;top:953px;width:25px;height:1px;background:#9EB6CE;"></div>
<div style="position:absolute;left:25px;top:970px;width:1639px;height:1px;background:#D0D7E5;"></div>
<div style="position:absolute;left:0px;top:970px;width:25px;height:1px;background:#9EB6CE;"></div>
<div style="position:absolute;left:229px;top:169px;width:1px;height:16px;background:#9EB6CE;"></div>
<div style="position:absolute;left:229px;top:186px;width:1px;height:796px;background:#D0D7E5;"></div>
<div style="position:absolute;left:418px;top:169px;width:1px;height:16px;background:#9EB6CE;"></div>
<div style="position:absolute;left:418px;top:186px;width:1px;height:796px;background:#D0D7E5;"></div>
<div style="position:absolute;left:541px;top:169px;width:1px;height:16px;background:#9EB6CE;"></div>
<div style="position:absolute;left:541px;top:186px;width:1px;height:796px;background:#D0D7E5;"></div>
<div style="position:absolute;left:647px;top:169px;width:1px;height:16px;background:#9EB6CE;"></div>
<div style="position:absolute;left:647px;top:186px;width:1px;height:796px;background:#D0D7E5;"></div>
<div style="position:absolute;left:731px;top:169px;width:1px;height:16px;background:#9EB6CE;"></div>
<div style="position:absolute;left:731px;top:186px;width:1px;height:796px;background:#D0D7E5;"></div>
<div style="position:absolute;left:859px;top:169px;width:1px;height:16px;background:#9EB6CE;"></div>
<div style="position:absolute;left:859px;top:186px;width:1px;height:796px;background:#D0D7E5;"></div>
<div style="position:absolute;left:989px;top:169px;width:1px;height:16px;background:#9EB6CE;"></div>
<div style="position:absolute;left:989px;top:186px;width:1px;height:796px;background:#D0D7E5;"></div>
<div style="position:absolute;left:1111px;top:169px;width:1px;height:16px;background:#9EB6CE;"></div>
<div style="position:absolute;left:1111px;top:186px;width:1px;height:796px;background:#D0D7E5;"></div>
<div style="position:absolute;left:1231px;top:169px;width:1px;height:16px;background:#9EB6CE;"></div>
<div style="position:absolute;left:1231px;top:186px;width:1px;height:796px;background:#D0D7E5;"></div>
<div style="position:absolute;left:1313px;top:169px;width:1px;height:16px;background:#9EB6CE;"></div>
<div style="position:absolute;left:1313px;top:186px;width:1px;height:796px;background:#D0D7E5;"></div>
<div style="position:absolute;left:1403px;top:169px;width:1px;height:16px;background:#9EB6CE;"></div>
<div style="position:absolute;left:1403px;top:186px;width:1px;height:796px;background:#D0D7E5;"></div>
<div style="position:absolute;left:1467px;top:169px;width:1px;height:16px;background:#9EB6CE;"></div>
<div style="position:absolute;left:1467px;top:186px;width:1px;height:796px;background:#D0D7E5;"></div>
<div style="position:absolute;left:1582px;top:169px;width:1px;height:16px;background:#9EB6CE;"></div>
<div style="position:absolute;left:1582px;top:186px;width:1px;height:796px;background:#D0D7E5;"></div>
<div style="position:absolute;left:1646px;top:169px;width:1px;height:16px;background:#9EB6CE;"></div>
<div style="position:absolute;left:1646px;top:186px;width:1px;height:796px;background:#D0D7E5;"></div>
<div style="position:absolute;left:25px;top:169px;width:1px;height:813px;background:#9EB6CE;"></div>
<div style="position:absolute;left:25px;top:171px;width:204px;text-align:center;font:13px/13px 'Liberation Sans', sans-serif;color:#27415F">A</div>
<div style="position:absolute;left:229px;top:171px;width:189px;text-align:center;font:13px/13px 'Liberation Sans', sans-serif;color:#27415F">B</div>
<div style="position:absolute;left:418px;top:171px;width:123px;text-align:center;font:13px/13px 'Liberation Sans', sans-serif;color:#27415F">C</div>
<div style="position:absolute;left:541px;top:171px;width:106px;text-align:center;font:13px/13px 'Liberation Sans', sans-serif;color:#27415F">D</div>
<div style="position:absolute;left:647px;top:171px;width:84px;text-align:center;font:13px/13px 'Liberation Sans', sans-serif;color:#27415F">E</div>
<div style="position:absolute;left:731px;top:171px;width:128px;text-align:center;font:13px/13px 'Liberation Sans', sans-serif;color:#27415F">F</div>
<div style="position:absolute;left:859px;top:171px;width:130px;text-align:center;font:13px/13px 'Liberation Sans', sans-serif;color:#27415F">G</div>
<div style="position:absolute;left:989px;top:171px;width:122px;text-align:center;font:13px/13px 'Liberation Sans', sans-serif;color:#27415F">H</div>
<div style="position:absolute;left:1112px;top:169px;width:119px;height:16px;background:linear-gradient(#F9D99F,#F1C15F);"></div>
<div style="position:absolute;left:1111px;top:184px;width:121px;height:1px;background:#F29536;"></div>
<div style="position:absolute;left:1111px;top:171px;width:120px;text-align:center;font:13px/13px 'Liberation Sans', sans-serif;color:#27415F">I</div>
<div style="position:absolute;left:1231px;top:171px;width:82px;text-align:center;font:13px/13px 'Liberation Sans', sans-serif;color:#27415F">J</div>
<div style="position:absolute;left:1313px;top:171px;width:90px;text-align:center;font:13px/13px 'Liberation Sans', sans-serif;color:#27415F">K</div>
<div style="position:absolute;left:1403px;top:171px;width:64px;text-align:center;font:13px/13px 'Liberation Sans', sans-serif;color:#27415F">L</div>
<div style="position:absolute;left:1467px;top:171px;width:115px;text-align:center;font:13px/13px 'Liberation Sans', sans-serif;color:#27415F">M</div>
<div style="position:absolute;left:1582px;top:171px;width:64px;text-align:center;font:13px/13px 'Liberation Sans', sans-serif;color:#27415F">N</div>
<div style="position:absolute;left:0px;top:664px;width:26px;height:18px;background:#FFD58D;border:1px solid #F29536;border-left:none;"></div>
<div style="position:absolute;left:0px;top:191px;width:25px;text-align:center;font:13px/13px 'Liberation Sans', sans-serif;color:#27415F">1</div>
<div style="position:absolute;left:0px;top:208px;width:25px;text-align:center;font:13px/13px 'Liberation Sans', sans-serif;color:#27415F">2</div>
<div style="position:absolute;left:0px;top:225px;width:25px;text-align:center;font:13px/13px 'Liberation Sans', sans-serif;color:#27415F">3</div>
<div style="position:absolute;left:0px;top:242px;width:25px;text-align:center;font:13px/13px 'Liberation Sans', sans-serif;color:#27415F">4</div>
<div style="position:absolute;left:0px;top:259px;width:25px;text-align:center;font:13px/13px 'Liberation Sans', sans-serif;color:#27415F">5</div>
<div style="position:absolute;left:0px;top:276px;width:25px;text-align:center;font:13px/13px 'Liberation Sans', sans-serif;color:#27415F">6</div>
<div style="position:absolute;left:0px;top:293px;width:25px;text-align:center;font:13px/13px 'Liberation Sans', sans-serif;color:#27415F">7</div>
<div style="position:absolute;left:0px;top:310px;width:25px;text-align:center;font:13px/13px 'Liberation Sans', sans-serif;color:#27415F">8</div>
<div style="position:absolute;left:0px;top:327px;width:25px;text-align:center;font:13px/13px 'Liberation Sans', sans-serif;color:#27415F">9</div>
<div style="position:absolute;left:0px;top:344px;width:25px;text-align:center;font:13px/13px 'Liberation Sans', sans-serif;color:#27415F">10</div>
<div style="position:absolute;left:0px;top:361px;width:25px;text-align:center;font:13px/13px 'Liberation Sans', sans-serif;color:#27415F">11</div>
<div style="position:absolute;left:0px;top:378px;width:25px;text-align:center;font:13px/13px 'Liberation Sans', sans-serif;color:#27415F">12</div>
<div style="position:absolute;left:0px;top:395px;width:25px;text-align:center;font:13px/13px 'Liberation Sans', sans-serif;color:#27415F">13</div>
<div style="position:absolute;left:0px;top:412px;width:25px;text-align:center;font:13px/13px 'Liberation Sans', sans-serif;color:#27415F">14</div>
<div style="position:absolute;left:0px;top:429px;width:25px;text-align:center;font:13px/13px 'Liberation Sans', sans-serif;color:#27415F">15</div>
<div style="position:absolute;left:0px;top:446px;width:25px;text-align:center;font:13px/13px 'Liberation Sans', sans-serif;color:#27415F">16</div>
<div style="position:absolute;left:0px;top:463px;width:25px;text-align:center;font:13px/13px 'Liberation Sans', sans-serif;color:#27415F">17</div>
<div style="position:absolute;left:0px;top:480px;width:25px;text-align:center;font:13px/13px 'Liberation Sans', sans-serif;color:#27415F">18</div>
<div style="position:absolute;left:0px;top:497px;width:25px;text-align:center;font:13px/13px 'Liberation Sans', sans-serif;color:#27415F">19</div>
<div style="position:absolute;left:0px;top:514px;width:25px;text-align:center;font:13px/13px 'Liberation Sans', sans-serif;color:#27415F">20</div>
<div style="position:absolute;left:0px;top:531px;width:25px;text-align:center;font:13px/13px 'Liberation Sans', sans-serif;color:#27415F">21</div>
<div style="position:absolute;left:0px;top:548px;width:25px;text-align:center;font:13px/13px 'Liberation Sans', sans-serif;color:#27415F">22</div>
<div style="position:absolute;left:0px;top:565px;width:25px;text-align:center;font:13px/13px 'Liberation Sans', sans-serif;color:#27415F">23</div>
<div style="position:absolute;left:0px;top:582px;width:25px;text-align:center;font:13px/13px 'Liberation Sans', sans-serif;color:#27415F">24</div>
<div style="position:absolute;left:0px;top:599px;width:25px;text-align:center;font:13px/13px 'Liberation Sans', sans-serif;color:#27415F">25</div>
<div style="position:absolute;left:0px;top:616px;width:25px;text-align:center;font:13px/13px 'Liberation Sans', sans-serif;color:#27415F">26</div>
<div style="position:absolute;left:0px;top:633px;width:25px;text-align:center;font:13px/13px 'Liberation Sans', sans-serif;color:#27415F">27</div>
<div style="position:absolute;left:0px;top:650px;width:25px;text-align:center;font:13px/13px 'Liberation Sans', sans-serif;color:#27415F">28</div>
<div style="position:absolute;left:0px;top:667px;width:25px;text-align:center;font:13px/13px 'Liberation Sans', sans-serif;color:#27415F">29</div>
<div style="position:absolute;left:0px;top:684px;width:25px;text-align:center;font:13px/13px 'Liberation Sans', sans-serif;color:#27415F">30</div>
<div style="position:absolute;left:0px;top:701px;width:25px;text-align:center;font:13px/13px 'Liberation Sans', sans-serif;color:#27415F">31</div>
<div style="position:absolute;left:0px;top:718px;width:25px;text-align:center;font:13px/13px 'Liberation Sans', sans-serif;color:#27415F">32</div>
<div style="position:absolute;left:0px;top:735px;width:25px;text-align:center;font:13px/13px 'Liberation Sans', sans-serif;color:#27415F">33</div>
<div style="position:absolute;left:0px;top:752px;width:25px;text-align:center;font:13px/13px 'Liberation Sans', sans-serif;color:#27415F">34</div>
<div style="position:absolute;left:0px;top:769px;width:25px;text-align:center;font:13px/13px 'Liberation Sans', sans-serif;color:#27415F">35</div>
<div style="position:absolute;left:0px;top:786px;width:25px;text-align:center;font:13px/13px 'Liberation Sans', sans-serif;color:#27415F">36</div>
<div style="position:absolute;left:0px;top:803px;width:25px;text-align:center;font:13px/13px 'Liberation Sans', sans-serif;color:#27415F">37</div>
<div style="position:absolute;left:0px;top:820px;width:25px;text-align:center;font:13px/13px 'Liberation Sans', sans-serif;color:#27415F">38</div>
<div style="position:absolute;left:0px;top:837px;width:25px;text-align:center;font:13px/13px 'Liberation Sans', sans-serif;color:#27415F">39</div>
<div style="position:absolute;left:0px;top:854px;width:25px;text-align:center;font:13px/13px 'Liberation Sans', sans-serif;color:#27415F">40</div>
<div style="position:absolute;left:0px;top:871px;width:25px;text-align:center;font:13px/13px 'Liberation Sans', sans-serif;color:#27415F">41</div>
<div style="position:absolute;left:0px;top:888px;width:25px;text-align:center;font:13px/13px 'Liberation Sans', sans-serif;color:#27415F">42</div>
<div style="position:absolute;left:0px;top:905px;width:25px;text-align:center;font:13px/13px 'Liberation Sans', sans-serif;color:#27415F">43</div>
<div style="position:absolute;left:0px;top:922px;width:25px;text-align:center;font:13px/13px 'Liberation Sans', sans-serif;color:#27415F">44</div>
<div style="position:absolute;left:0px;top:939px;width:25px;text-align:center;font:13px/13px 'Liberation Sans', sans-serif;color:#27415F">45</div>
<div style="position:absolute;left:0px;top:956px;width:25px;text-align:center;font:13px/13px 'Liberation Sans', sans-serif;color:#27415F">46</div>
<div style="position:absolute;left:0px;top:973px;width:25px;text-align:center;font:13px/13px 'Liberation Sans', sans-serif;color:#27415F">47</div>
<div style="position:absolute;left:26px;top:186px;width:203px;height:19px;overflow:hidden"><div style="position:absolute;left:2px;top:3px;font:bold 16px/16px 'Liberation Serif', serif;color:#000;white-space:nowrap">Произведение</div></div>
<div style="position:absolute;left:213px;top:187px;width:15px;height:17px;background:linear-gradient(#F4F6F9,#DCE1E8);border:1px solid #A9B4C4;border-radius:2px"></div>
<div style="position:absolute;left:217px;top:194px;width:0;height:0;border-left:3.5px solid transparent;border-right:3.5px solid transparent;border-top:4px solid #2E3F7A"></div>
<div style="position:absolute;left:230px;top:186px;width:188px;height:19px;overflow:hidden"><div style="position:absolute;left:2px;top:3px;font:bold 16px/16px 'Liberation Serif', serif;color:#000;white-space:nowrap">ФИО автора</div></div>
<div style="position:absolute;left:402px;top:187px;width:15px;height:17px;background:linear-gradient(#F4F6F9,#DCE1E8);border:1px solid #A9B4C4;border-radius:2px"></div>
<div style="position:absolute;left:406px;top:194px;width:0;height:0;border-left:3.5px solid transparent;border-right:3.5px solid transparent;border-top:4px solid #2E3F7A"></div>
<div style="position:absolute;left:419px;top:186px;width:122px;height:19px;overflow:hidden"><div style="position:absolute;left:2px;top:3px;font:bold 16px/16px 'Liberation Serif', serif;color:#000;white-space:nowrap">Издательство</div></div>
<div style="position:absolute;left:525px;top:187px;width:15px;height:17px;background:linear-gradient(#F4F6F9,#DCE1E8);border:1px solid #A9B4C4;border-radius:2px"></div>
<div style="position:absolute;left:529px;top:194px;width:0;height:0;border-left:3.5px solid transparent;border-right:3.5px solid transparent;border-top:4px solid #2E3F7A"></div>
<div style="position:absolute;left:542px;top:186px;width:105px;height:19px;overflow:hidden"><div style="position:absolute;left:2px;top:3px;font:bold 16px/16px 'Liberation Serif', serif;color:#000;white-space:nowrap">Дата издания</div></div>
<div style="position:absolute;left:631px;top:187px;width:15px;height:17px;background:linear-gradient(#F4F6F9,#DCE1E8);border:1px solid #A9B4C4;border-radius:2px"></div>
<div style="position:absolute;left:635px;top:194px;width:0;height:0;border-left:3.5px solid transparent;border-right:3.5px solid transparent;border-top:4px solid #2E3F7A"></div>
<div style="position:absolute;left:648px;top:186px;width:83px;height:19px;overflow:hidden"><div style="position:absolute;left:2px;top:3px;font:bold 16px/16px 'Liberation Serif', serif;color:#000;white-space:nowrap">Цена (руб)</div></div>
<div style="position:absolute;left:715px;top:187px;width:15px;height:17px;background:linear-gradient(#F4F6F9,#DCE1E8);border:1px solid #A9B4C4;border-radius:2px"></div>
<div style="position:absolute;left:719px;top:194px;width:0;height:0;border-left:3.5px solid transparent;border-right:3.5px solid transparent;border-top:4px solid #2E3F7A"></div>
<div style="position:absolute;left:732px;top:186px;width:127px;height:19px;overflow:hidden"><div style="position:absolute;left:2px;top:3px;font:bold 16px/16px 'Liberation Serif', serif;color:#000;white-space:nowrap">Дата распродажи</div></div>
<div style="position:absolute;left:843px;top:187px;width:15px;height:17px;background:linear-gradient(#F4F6F9,#DCE1E8);border:1px solid #A9B4C4;border-radius:2px"></div>
<div style="position:absolute;left:847px;top:194px;width:0;height:0;border-left:3.5px solid transparent;border-right:3.5px solid transparent;border-top:4px solid #2E3F7A"></div>
<div style="position:absolute;left:860px;top:186px;width:129px;height:19px;overflow:hidden"><div style="position:absolute;left:2px;top:3px;font:bold 16px/16px 'Liberation Serif', serif;color:#000;white-space:nowrap">Коэф. Стоимости</div></div>
<div style="position:absolute;left:973px;top:187px;width:15px;height:17px;background:linear-gradient(#F4F6F9,#DCE1E8);border:1px solid #A9B4C4;border-radius:2px"></div>
<div style="position:absolute;left:977px;top:194px;width:0;height:0;border-left:3.5px solid transparent;border-right:3.5px solid transparent;border-top:4px solid #2E3F7A"></div>
<div style="position:absolute;left:990px;top:186px;width:121px;height:19px;overflow:hidden"><div style="position:absolute;left:2px;top:3px;font:bold 16px/16px 'Liberation Serif', serif;color:#000;white-space:nowrap">Оптовая скидка</div></div>
<div style="position:absolute;left:1095px;top:187px;width:15px;height:17px;background:linear-gradient(#F4F6F9,#DCE1E8);border:1px solid #A9B4C4;border-radius:2px"></div>
<div style="position:absolute;left:1099px;top:194px;width:0;height:0;border-left:3.5px solid transparent;border-right:3.5px solid transparent;border-top:4px solid #2E3F7A"></div>
<div style="position:absolute;left:1112px;top:186px;width:119px;height:19px;overflow:hidden"><div style="position:absolute;left:2px;top:3px;font:bold 16px/16px 'Liberation Serif', serif;color:#000;white-space:nowrap">Стоимость(руб)</div></div>
<div style="position:absolute;left:1215px;top:187px;width:15px;height:17px;background:linear-gradient(#F4F6F9,#DCE1E8);border:1px solid #A9B4C4;border-radius:2px"></div>
<div style="position:absolute;left:1219px;top:194px;width:0;height:0;border-left:3.5px solid transparent;border-right:3.5px solid transparent;border-top:4px solid #2E3F7A"></div>
<div style="position:absolute;left:1232px;top:186px;width:81px;height:19px;overflow:hidden"><div style="position:absolute;left:2px;top:3px;font:bold 16px/16px 'Liberation Serif', serif;color:#000;white-space:nowrap">Заказ (шт)</div></div>
<div style="position:absolute;left:1297px;top:187px;width:15px;height:17px;background:linear-gradient(#F4F6F9,#DCE1E8);border:1px solid #A9B4C4;border-radius:2px"></div>
<div style="position:absolute;left:1301px;top:194px;width:0;height:0;border-left:3.5px solid transparent;border-right:3.5px solid transparent;border-top:4px solid #2E3F7A"></div>
<div style="position:absolute;left:1314px;top:186px;width:89px;height:19px;overflow:hidden"><div style="position:absolute;left:2px;top:3px;font:bold 16px/16px 'Liberation Serif', serif;color:#000;white-space:nowrap">Сумма(руб)</div></div>
<div style="position:absolute;left:1387px;top:187px;width:15px;height:17px;background:linear-gradient(#F4F6F9,#DCE1E8);border:1px solid #A9B4C4;border-radius:2px"></div>
<div style="position:absolute;left:1391px;top:194px;width:0;height:0;border-left:3.5px solid transparent;border-right:3.5px solid transparent;border-top:4px solid #2E3F7A"></div>
<div style="position:absolute;left:26px;top:205px;width:1378px;height:1px;background:#000;"></div>
<div style="position:absolute;left:229px;top:186px;width:1px;height:20px;background:#000;"></div>
<div style="position:absolute;left:418px;top:186px;width:1px;height:20px;background:#000;"></div>
<div style="position:absolute;left:541px;top:186px;width:1px;height:20px;background:#000;"></div>
<div style="position:absolute;left:647px;top:186px;width:1px;height:20px;background:#000;"></div>
<div style="position:absolute;left:731px;top:186px;width:1px;height:20px;background:#000;"></div>
<div style="position:absolute;left:859px;top:186px;width:1px;height:20px;background:#000;"></div>
<div style="position:absolute;left:989px;top:186px;width:1px;height:20px;background:#000;"></div>
<div style="position:absolute;left:1111px;top:186px;width:1px;height:20px;background:#000;"></div>
<div style="position:absolute;left:1231px;top:186px;width:1px;height:20px;background:#000;"></div>
<div style="position:absolute;left:1313px;top:186px;width:1px;height:20px;background:#000;"></div>
<div style="position:absolute;left:1403px;top:186px;width:1px;height:20px;background:#000;"></div>
<div style="position:absolute;left:28px;top:208px;font:13px/13px 'Liberation Sans', sans-serif;color:#000;white-space:nowrap">Филиал</div>
<div style="position:absolute;left:232px;top:208px;font:13px/13px 'Liberation Sans', sans-serif;color:#000;white-space:nowrap">Довлатов Сергей Донатович</div>
<div style="position:absolute;left:421px;top:208px;font:13px/13px 'Liberation Sans', sans-serif;color:#000;white-space:nowrap">Дрофа</div>
<div style="position:absolute;left:541px;top:208px;width:104px;text-align:right;font:13px/13px 'Liberation Sans', sans-serif;color:#000;white-space:nowrap">2005</div>
<div style="position:absolute;left:647px;top:208px;width:82px;text-align:right;font:13px/13px 'Liberation Sans', sans-serif;color:#000;white-space:nowrap">160,00р.</div>
<div style="position:absolute;left:731px;top:208px;width:126px;text-align:right;font:13px/13px 'Liberation Sans', sans-serif;color:#000;white-space:nowrap">27.04.2009</div>
<div style="position:absolute;left:859px;top:208px;width:128px;text-align:right;font:13px/13px 'Liberation Sans', sans-serif;color:#000;white-space:nowrap">70%</div>
<div style="position:absolute;left:989px;top:208px;width:120px;text-align:right;font:13px/13px 'Liberation Sans', sans-serif;color:#000;white-space:nowrap">90%</div>
<div style="position:absolute;left:1111px;top:208px;width:118px;text-align:right;font:13px/13px 'Liberation Sans', sans-serif;color:#000;white-space:nowrap">112,00р.</div>
<div style="position:absolute;left:1231px;top:208px;width:80px;text-align:right;font:13px/13px 'Liberation Sans', sans-serif;color:#000;white-space:nowrap">2</div>
<div style="position:absolute;left:1313px;top:208px;width:88px;text-align:right;font:13px/13px 'Liberation Sans', sans-serif;color:#000;white-space:nowrap">224,00р.</div>
<div style="position:absolute;left:28px;top:225px;font:13px/13px 'Liberation Sans', sans-serif;color:#000;white-space:nowrap">Невидимая книга</div>
<div style="position:absolute;left:232px;top:225px;font:13px/13px 'Liberation Sans', sans-serif;color:#000;white-space:nowrap">Довлатов Сергей Донатович</div>
<div style="position:absolute;left:421px;top:225px;font:13px/13px 'Liberation Sans', sans-serif;color:#000;white-space:nowrap">Центрполиграф</div>
<div style="position:absolute;left:541px;top:225px;width:104px;text-align:right;font:13px/13px 'Liberation Sans', sans-serif;color:#000;white-space:nowrap">2003</div>
<div style="position:absolute;left:647px;top:225px;width:82px;text-align:right;font:13px/13px 'Liberation Sans', sans-serif;color:#000;white-space:nowrap">89,00р.</div>
<div style="position:absolute;left:731px;top:225px;width:126px;text-align:right;font:13px/13px 'Liberation Sans', sans-serif;color:#000;white-space:nowrap">02.05.2009</div>
<div style="position:absolute;left:859px;top:225px;width:128px;text-align:right;font:13px/13px 'Liberation Sans', sans-serif;color:#000;white-space:nowrap">100%</div>
<div style="position:absolute;left:989px;top:225px;width:120px;text-align:right;font:13px/13px 'Liberation Sans', sans-serif;color:#000;white-space:nowrap">90%</div>
<div style="position:absolute;left:1111px;top:225px;width:118px;text-align:right;font:13px/13px 'Liberation Sans', sans-serif;color:#000;white-space:nowrap">89,00р.</div>
<div style="position:absolute;left:1231px;top:225px;width:80px;text-align:right;font:13px/13px 'Liberation Sans', sans-serif;color:#000;white-space:nowrap">1</div>
<div style="position:absolute;left:1313px;top:225px;width:88px;text-align:right;font:13px/13px 'Liberation Sans', sans-serif;color:#000;white-space:nowrap">89,00р.</div>
<div style="position:absolute;left:28px;top:242px;font:13px/13px 'Liberation Sans', sans-serif;color:#000;white-space:nowrap">Вечера на хуторе близ Диканьки</div>
<div style="position:absolute;left:232px;top:242px;font:13px/13px 'Liberation Sans', sans-serif;color:#000;white-space:nowrap">Гоголь Николай Васильевич</div>
<div style="position:absolute;left:421px;top:242px;font:13px/13px 'Liberation Sans', sans-serif;color:#000;white-space:nowrap">Просвещение</div>
<div style="position:absolute;left:541px;top:242px;width:104px;text-align:right;font:13px/13px 'Liberation Sans', sans-serif;color:#000;white-space:nowrap">2002</div>
<div style="position:absolute;left:647px;top:242px;width:82px;text-align:right;font:13px/13px 'Liberation Sans', sans-serif;color:#000;white-space:nowrap">100,00р.</div>
<div style="position:absolute;left:731px;top:242px;width:126px;text-align:right;font:13px/13px 'Liberation Sans', sans-serif;color:#000;white-space:nowrap">09.09.2009</div>
<div style="position:absolute;left:859px;top:242px;width:128px;text-align:right;font:13px/13px 'Liberation Sans', sans-serif;color:#000;white-space:nowrap">100%</div>
<div style="position:absolute;left:989px;top:242px;width:120px;text-align:right;font:13px/13px 'Liberation Sans', sans-serif;color:#000;white-space:nowrap">80%</div>
<div style="position:absolute;left:1111px;top:242px;width:118px;text-align:right;font:13px/13px 'Liberation Sans', sans-serif;color:#000;white-space:nowrap">80,00р.</div>
<div style="position:absolute;left:1231px;top:242px;width:80px;text-align:right;font:13px/13px 'Liberation Sans', sans-serif;color:#000;white-space:nowrap">15</div>
<div style="position:absolute;left:1313px;top:242px;width:88px;text-align:right;font:13px/13px 'Liberation Sans', sans-serif;color:#000;white-space:nowrap">1 200,00р.</div>
<div style="position:absolute;left:28px;top:259px;font:13px/13px 'Liberation Sans', sans-serif;color:#000;white-space:nowrap">Тарас Бульба</div>
<div style="position:absolute;left:232px;top:259px;font:13px/13px 'Liberation Sans', sans-serif;color:#000;white-space:nowrap">Гоголь Николай Васильевич</div>
<div style="position:absolute;left:421px;top:259px;font:13px/13px 'Liberation Sans', sans-serif;color:#000;white-space:nowrap">Просвещение</div>
<div style="position:absolute;left:541px;top:259px;width:104px;text-align:right;font:13px/13px 'Liberation Sans', sans-serif;color:#000;white-space:nowrap">2005</div>
<div style="position:absolute;left:647px;top:259px;width:82px;text-align:right;font:13px/13px 'Liberation Sans', sans-serif;color:#000;white-space:nowrap">140,00р.</div>
<div style="position:absolute;left:731px;top:259px;width:126px;text-align:right;font:13px/13px 'Liberation Sans', sans-serif;color:#000;white-space:nowrap">09.05.2009</div>
<div style="position:absolute;left:859px;top:259px;width:128px;text-align:right;font:13px/13px 'Liberation Sans', sans-serif;color:#000;white-space:nowrap">100%</div>
<div style="position:absolute;left:989px;top:259px;width:120px;text-align:right;font:13px/13px 'Liberation Sans', sans-serif;color:#000;white-space:nowrap">90%</div>
<div style="position:absolute;left:1111px;top:259px;width:118px;text-align:right;font:13px/13px 'Liberation Sans', sans-serif;color:#000;white-space:nowrap">126,00р.</div>
<div style="position:absolute;left:1231px;top:259px;width:80px;text-align:right;font:13px/13px 'Liberation Sans', sans-serif;color:#000;white-space:nowrap">7</div>
<div style="position:absolute;left:1313px;top:259px;width:88px;text-align:right;font:13px/13px 'Liberation Sans', sans-serif;color:#000;white-space:nowrap">882,00р.</div>
<div style="position:absolute;left:28px;top:276px;font:13px/13px 'Liberation Sans', sans-serif;color:#000;white-space:nowrap">Математика</div>
<div style="position:absolute;left:232px;top:276px;font:13px/13px 'Liberation Sans', sans-serif;color:#000;white-space:nowrap">Чебышев Пафнутий Львович</div>
<div style="position:absolute;left:421px;top:276px;font:13px/13px 'Liberation Sans', sans-serif;color:#000;white-space:nowrap">Питер</div>
<div style="position:absolute;left:541px;top:276px;width:104px;text-align:right;font:13px/13px 'Liberation Sans', sans-serif;color:#000;white-space:nowrap">2003</div>
<div style="position:absolute;left:647px;top:276px;width:82px;text-align:right;font:13px/13px 'Liberation Sans', sans-serif;color:#000;white-space:nowrap">230,00р.</div>
<div style="position:absolute;left:731px;top:276px;width:126px;text-align:right;font:13px/13px 'Liberation Sans', sans-serif;color:#000;white-space:nowrap">13.05.2009</div>
<div style="position:absolute;left:859px;top:276px;width:128px;text-align:right;font:13px/13px 'Liberation Sans', sans-serif;color:#000;white-space:nowrap">100%</div>
<div style="position:absolute;left:989px;top:276px;width:120px;text-align:right;font:13px/13px 'Liberation Sans', sans-serif;color:#000;white-space:nowrap">80%</div>
<div style="position:absolute;left:1111px;top:276px;width:118px;text-align:right;font:13px/13px 'Liberation Sans', sans-serif;color:#000;white-space:nowrap">184,00р.</div>
<div style="position:absolute;left:1231px;top:276px;width:80px;text-align:right;font:13px/13px 'Liberation Sans', sans-serif;color:#000;white-space:nowrap">22</div>
<div style="position:absolute;left:1313px;top:276px;width:88px;text-align:right;font:13px/13px 'Liberation Sans', sans-serif;color:#000;white-space:nowrap">4 048,00р.</div>
<div style="position:absolute;left:28px;top:293px;font:13px/13px 'Liberation Sans', sans-serif;color:#000;white-space:nowrap">Вий</div>
<div style="position:absolute;left:232px;top:293px;font:13px/13px 'Liberation Sans', sans-serif;color:#000;white-space:nowrap">Гоголь Николай Васильевич</div>
<div style="position:absolute;left:421px;top:293px;font:13px/13px 'Liberation Sans', sans-serif;color:#000;white-space:nowrap">Мир</div>
<div style="position:absolute;left:541px;top:293px;width:104px;text-align:right;font:13px/13px 'Liberation Sans', sans-serif;color:#000;white-space:nowrap">2008</div>
<div style="position:absolute;left:647px;top:293px;width:82px;text-align:right;font:13px/13px 'Liberation Sans', sans-serif;color:#000;white-space:nowrap">100,00р.</div>
<div style="position:absolute;left:731px;top:293px;width:126px;text-align:right;font:13px/13px 'Liberation Sans', sans-serif;color:#000;white-space:nowrap">06.05.2009</div>
<div style="position:absolute;left:859px;top:293px;width:128px;text-align:right;font:13px/13px 'Liberation Sans', sans-serif;color:#000;white-space:nowrap">100%</div>
<div style="position:absolute;left:989px;top:293px;width:120px;text-align:right;font:13px/13px 'Liberation Sans', sans-serif;color:#000;white-space:nowrap">90%</div>
<div style="position:absolute;left:1111px;top:293px;width:118px;text-align:right;font:13px/13px 'Liberation Sans', sans-serif;color:#000;white-space:nowrap">100,00р.</div>
<div style="position:absolute;left:1231px;top:293px;width:80px;text-align:right;font:13px/13px 'Liberation Sans', sans-serif;color:#000;white-space:nowrap">1</div>
<div style="position:absolute;left:1313px;top:293px;width:88px;text-align:right;font:13px/13px 'Liberation Sans', sans-serif;color:#000;white-space:nowrap">100,00р.</div>
<div style="position:absolute;left:28px;top:310px;font:13px/13px 'Liberation Sans', sans-serif;color:#000;white-space:nowrap">Аферисты</div>
<div style="position:absolute;left:232px;top:310px;font:13px/13px 'Liberation Sans', sans-serif;color:#000;white-space:nowrap">Малюгин Александр</div>
<div style="position:absolute;left:421px;top:310px;font:13px/13px 'Liberation Sans', sans-serif;color:#000;white-space:nowrap">Центрполиграф</div>
<div style="position:absolute;left:541px;top:310px;width:104px;text-align:right;font:13px/13px 'Liberation Sans', sans-serif;color:#000;white-space:nowrap">2008</div>
<div style="position:absolute;left:647px;top:310px;width:82px;text-align:right;font:13px/13px 'Liberation Sans', sans-serif;color:#000;white-space:nowrap">120,00р.</div>
<div style="position:absolute;left:731px;top:310px;width:126px;text-align:right;font:13px/13px 'Liberation Sans', sans-serif;color:#000;white-space:nowrap">01.05.2009</div>
<div style="position:absolute;left:859px;top:310px;width:128px;text-align:right;font:13px/13px 'Liberation Sans', sans-serif;color:#000;white-space:nowrap">100%</div>
<div style="position:absolute;left:989px;top:310px;width:120px;text-align:right;font:13px/13px 'Liberation Sans', sans-serif;color:#000;white-space:nowrap">90%</div>
<div style="position:absolute;left:1111px;top:310px;width:118px;text-align:right;font:13px/13px 'Liberation Sans', sans-serif;color:#000;white-space:nowrap">120,00р.</div>
<div style="position:absolute;left:1231px;top:310px;width:80px;text-align:right;font:13px/13px 'Liberation Sans', sans-serif;color:#000;white-space:nowrap">1</div>
<div style="position:absolute;left:1313px;top:310px;width:88px;text-align:right;font:13px/13px 'Liberation Sans', sans-serif;color:#000;white-space:nowrap">120,00р.</div>
<div style="position:absolute;left:28px;top:327px;font:13px/13px 'Liberation Sans', sans-serif;color:#000;white-space:nowrap">Капитанская дочка</div>
<div style="position:absolute;left:232px;top:327px;font:13px/13px 'Liberation Sans', sans-serif;color:#000;white-space:nowrap">Пушкин Александр Сергеевич</div>
<div style="position:absolute;left:421px;top:327px;font:13px/13px 'Liberation Sans', sans-serif;color:#000;white-space:nowrap">Классика</div>
<div style="position:absolute;left:541px;top:327px;width:104px;text-align:right;font:13px/13px 'Liberation Sans', sans-serif;color:#000;white-space:nowrap">1999</div>
<div style="position:absolute;left:647px;top:327px;width:82px;text-align:right;font:13px/13px 'Liberation Sans', sans-serif;color:#000;white-space:nowrap">80,00р.</div>
<div style="position:absolute;left:731px;top:327px;width:126px;text-align:right;font:13px/13px 'Liberation Sans', sans-serif;color:#000;white-space:nowrap">01.05.2009</div>
<div style="position:absolute;left:859px;top:327px;width:128px;text-align:right;font:13px/13px 'Liberation Sans', sans-serif;color:#000;white-space:nowrap">100%</div>
<div style="position:absolute;left:989px;top:327px;width:120px;text-align:right;font:13px/13px 'Liberation Sans', sans-serif;color:#000;white-space:nowrap">90%</div>
<div style="position:absolute;left:1111px;top:327px;width:118px;text-align:right;font:13px/13px 'Liberation Sans', sans-serif;color:#000;white-space:nowrap">72,00р.</div>
<div style="position:absolute;left:1231px;top:327px;width:80px;text-align:right;font:13px/13px 'Liberation Sans', sans-serif;color:#000;white-space:nowrap">9</div>
<div style="position:absolute;left:1313px;top:327px;width:88px;text-align:right;font:13px/13px 'Liberation Sans', sans-serif;color:#000;white-space:nowrap">648,00р.</div>
<div style="position:absolute;left:28px;top:344px;font:13px/13px 'Liberation Sans', sans-serif;color:#000;white-space:nowrap">Руслан и Людмила</div>
<div style="position:absolute;left:232px;top:344px;font:13px/13px 'Liberation Sans', sans-serif;color:#000;white-space:nowrap">Пушкин Александр Сергеевич</div>
<div style="position:absolute;left:421px;top:344px;font:13px/13px 'Liberation Sans', sans-serif;color:#000;white-space:nowrap">Классика</div>
<div style="position:absolute;left:541px;top:344px;width:104px;text-align:right;font:13px/13px 'Liberation Sans', sans-serif;color:#000;white-space:nowrap">1999</div>
<div style="position:absolute;left:647px;top:344px;width:82px;text-align:right;font:13px/13px 'Liberation Sans', sans-serif;color:#000;white-space:nowrap">107,00р.</div>
<div style="position:absolute;left:731px;top:344px;width:126px;text-align:right;font:13px/13px 'Liberation Sans', sans-serif;color:#000;white-space:nowrap">09.05.2009</div>
<div style="position:absolute;left:859px;top:344px;width:128px;text-align:right;font:13px/13px 'Liberation Sans', sans-serif;color:#000;white-space:nowrap">100%</div>
<div style="position:absolute;left:989px;top:344px;width:120px;text-align:right;font:13px/13px 'Liberation Sans', sans-serif;color:#000;white-space:nowrap">90%</div>
<div style="position:absolute;left:1111px;top:344px;width:118px;text-align:right;font:13px/13px 'Liberation Sans', sans-serif;color:#000;white-space:nowrap">107,00р.</div>
<div style="position:absolute;left:1231px;top:344px;width:80px;text-align:right;font:13px/13px 'Liberation Sans', sans-serif;color:#000;white-space:nowrap">1</div>
<div style="position:absolute;left:1313px;top:344px;width:88px;text-align:right;font:13px/13px 'Liberation Sans', sans-serif;color:#000;white-space:nowrap">107,00р.</div>
<div style="position:absolute;left:28px;top:361px;font:13px/13px 'Liberation Sans', sans-serif;color:#000;white-space:nowrap">Биология 8 класс</div>
<div style="position:absolute;left:232px;top:361px;font:13px/13px 'Liberation Sans', sans-serif;color:#000;white-space:nowrap">Краева Екатерина Викторовна</div>
<div style="position:absolute;left:421px;top:361px;font:13px/13px 'Liberation Sans', sans-serif;color:#000;white-space:nowrap">Дрофа</div>
<div style="position:absolute;left:541px;top:361px;width:104px;text-align:right;font:13px/13px 'Liberation Sans', sans-serif;color:#000;white-space:nowrap">2006</div>
<div style="position:absolute;left:647px;top:361px;width:82px;text-align:right;font:13px/13px 'Liberation Sans', sans-serif;color:#000;white-space:nowrap">180,00р.</div>
<div style="position:absolute;left:731px;top:361px;width:126px;text-align:right;font:13px/13px 'Liberation Sans', sans-serif;color:#000;white-space:nowrap">01.05.2009</div>
<div style="position:absolute;left:859px;top:361px;width:128px;text-align:right;font:13px/13px 'Liberation Sans', sans-serif;color:#000;white-space:nowrap">100%</div>
<div style="position:absolute;left:989px;top:361px;width:120px;text-align:right;font:13px/13px 'Liberation Sans', sans-serif;color:#000;white-space:nowrap">80%</div>
<div style="position:absolute;left:1111px;top:361px;width:118px;text-align:right;font:13px/13px 'Liberation Sans', sans-serif;color:#000;white-space:nowrap">144,00р.</div>
<div style="position:absolute;left:1231px;top:361px;width:80px;text-align:right;font:13px/13px 'Liberation Sans', sans-serif;color:#000;white-space:nowrap">34</div>
<div style="position:absolute;left:1313px;top:361px;width:88px;text-align:right;font:13px/13px 'Liberation Sans', sans-serif;color:#000;white-space:nowrap">4 896,00р.</div>
<div style="position:absolute;left:28px;top:378px;font:13px/13px 'Liberation Sans', sans-serif;color:#000;white-space:nowrap">Сборник стихов</div>
<div style="position:absolute;left:232px;top:378px;font:13px/13px 'Liberation Sans', sans-serif;color:#000;white-space:nowrap">Ахматова Анна Андреевна</div>
<div style="position:absolute;left:421px;top:378px;font:13px/13px 'Liberation Sans', sans-serif;color:#000;white-space:nowrap">Классика</div>
<div style="position:absolute;left:541px;top:378px;width:104px;text-align:right;font:13px/13px 'Liberation Sans', sans-serif;color:#000;white-space:nowrap">1999</div>
<div style="position:absolute;left:647px;top:378px;width:82px;text-align:right;font:13px/13px 'Liberation Sans', sans-serif;color:#000;white-space:nowrap">99,00р.</div>
<div style="position:absolute;left:731px;top:378px;width:126px;text-align:right;font:13px/13px 'Liberation Sans', sans-serif;color:#000;white-space:nowrap">27.04.2009</div>
<div style="position:absolute;left:859px;top:378px;width:128px;text-align:right;font:13px/13px 'Liberation Sans', sans-serif;color:#000;white-space:nowrap">70%</div>
<div style="position:absolute;left:989px;top:378px;width:120px;text-align:right;font:13px/13px 'Liberation Sans', sans-serif;color:#000;white-space:nowrap">90%</div>
<div style="position:absolute;left:1111px;top:378px;width:118px;text-align:right;font:13px/13px 'Liberation Sans', sans-serif;color:#000;white-space:nowrap">69,30р.</div>
<div style="position:absolute;left:1231px;top:378px;width:80px;text-align:right;font:13px/13px 'Liberation Sans', sans-serif;color:#000;white-space:nowrap">3</div>
<div style="position:absolute;left:1313px;top:378px;width:88px;text-align:right;font:13px/13px 'Liberation Sans', sans-serif;color:#000;white-space:nowrap">207,90р.</div>
<div style="position:absolute;left:28px;top:395px;font:13px/13px 'Liberation Sans', sans-serif;color:#000;white-space:nowrap">Война и Мир</div>
<div style="position:absolute;left:232px;top:395px;font:13px/13px 'Liberation Sans', sans-serif;color:#000;white-space:nowrap">Толстой Лев Николаевич</div>
<div style="position:absolute;left:421px;top:395px;font:13px/13px 'Liberation Sans', sans-serif;color:#000;white-space:nowrap">Питер</div>
<div style="position:absolute;left:541px;top:395px;width:104px;text-align:right;font:13px/13px 'Liberation Sans', sans-serif;color:#000;white-space:nowrap">2002</div>
<div style="position:absolute;left:647px;top:395px;width:82px;text-align:right;font:13px/13px 'Liberation Sans', sans-serif;color:#000;white-space:nowrap">340,00р.</div>
<div style="position:absolute;left:731px;top:395px;width:126px;text-align:right;font:13px/13px 'Liberation Sans', sans-serif;color:#000;white-space:nowrap">26.04.2009</div>
<div style="position:absolute;left:859px;top:395px;width:128px;text-align:right;font:13px/13px 'Liberation Sans', sans-serif;color:#000;white-space:nowrap">100%</div>
<div style="position:absolute;left:989px;top:395px;width:120px;text-align:right;font:13px/13px 'Liberation Sans', sans-serif;color:#000;white-space:nowrap">90%</div>
<div style="position:absolute;left:1111px;top:395px;width:118px;text-align:right;font:13px/13px 'Liberation Sans', sans-serif;color:#000;white-space:nowrap">340,00р.</div>
<div style="position:absolute;left:1231px;top:395px;width:80px;text-align:right;font:13px/13px 'Liberation Sans', sans-serif;color:#000;white-space:nowrap">2</div>
<div style="position:absolute;left:1313px;top:395px;width:88px;text-align:right;font:13px/13px 'Liberation Sans', sans-serif;color:#000;white-space:nowrap">680,00р.</div>
<div style="position:absolute;left:28px;top:412px;font:13px/13px 'Liberation Sans', sans-serif;color:#000;white-space:nowrap">Анна Каренина</div>
<div style="position:absolute;left:232px;top:412px;font:13px/13px 'Liberation Sans', sans-serif;color:#000;white-space:nowrap">Толстой Лев Николаевич</div>
<div style="position:absolute;left:421px;top:412px;font:13px/13px 'Liberation Sans', sans-serif;color:#000;white-space:nowrap">Просвещение</div>
<div style="position:absolute;left:541px;top:412px;width:104px;text-align:right;font:13px/13px 'Liberation Sans', sans-serif;color:#000;white-space:nowrap">2005</div>
<div style="position:absolute;left:647px;top:412px;width:82px;text-align:right;font:13px/13px 'Liberation Sans', sans-serif;color:#000;white-space:nowrap">200,00р.</div>
<div style="position:absolute;left:731px;top:412px;width:126px;text-align:right;font:13px/13px 'Liberation Sans', sans-serif;color:#000;white-space:nowrap">09.09.2009</div>
<div style="position:absolute;left:859px;top:412px;width:128px;text-align:right;font:13px/13px 'Liberation Sans', sans-serif;color:#000;white-space:nowrap">100%</div>
<div style="position:absolute;left:989px;top:412px;width:120px;text-align:right;font:13px/13px 'Liberation Sans', sans-serif;color:#000;white-space:nowrap">90%</div>
<div style="position:absolute;left:1111px;top:412px;width:118px;text-align:right;font:13px/13px 'Liberation Sans', sans-serif;color:#000;white-space:nowrap">200,00р.</div>
<div style="position:absolute;left:1231px;top:412px;width:80px;text-align:right;font:13px/13px 'Liberation Sans', sans-serif;color:#000;white-space:nowrap">1</div>
<div style="position:absolute;left:1313px;top:412px;width:88px;text-align:right;font:13px/13px 'Liberation Sans', sans-serif;color:#000;white-space:nowrap">200,00р.</div>
<div style="position:absolute;left:28px;top:429px;font:13px/13px 'Liberation Sans', sans-serif;color:#000;white-space:nowrap">Зона</div>
<div style="position:absolute;left:232px;top:429px;font:13px/13px 'Liberation Sans', sans-serif;color:#000;white-space:nowrap">Довлатов Сергей Донатович</div>
<div style="position:absolute;left:421px;top:429px;font:13px/13px 'Liberation Sans', sans-serif;color:#000;white-space:nowrap">Питер</div>
<div style="position:absolute;left:541px;top:429px;width:104px;text-align:right;font:13px/13px 'Liberation Sans', sans-serif;color:#000;white-space:nowrap">2003</div>
<div style="position:absolute;left:647px;top:429px;width:82px;text-align:right;font:13px/13px 'Liberation Sans', sans-serif;color:#000;white-space:nowrap">160,00р.</div>
<div style="position:absolute;left:731px;top:429px;width:126px;text-align:right;font:13px/13px 'Liberation Sans', sans-serif;color:#000;white-space:nowrap">05.05.2009</div>
<div style="position:absolute;left:859px;top:429px;width:128px;text-align:right;font:13px/13px 'Liberation Sans', sans-serif;color:#000;white-space:nowrap">100%</div>
<div style="position:absolute;left:989px;top:429px;width:120px;text-align:right;font:13px/13px 'Liberation Sans', sans-serif;color:#000;white-space:nowrap">90%</div>
<div style="position:absolute;left:1111px;top:429px;width:118px;text-align:right;font:13px/13px 'Liberation Sans', sans-serif;color:#000;white-space:nowrap">160,00р.</div>
<div style="position:absolute;left:1231px;top:429px;width:80px;text-align:right;font:13px/13px 'Liberation Sans', sans-serif;color:#000;white-space:nowrap">5</div>
<div style="position:absolute;left:1313px;top:429px;width:88px;text-align:right;font:13px/13px 'Liberation Sans', sans-serif;color:#000;white-space:nowrap">800,00р.</div>
<div style="position:absolute;left:1110px;top:663px;width:123px;height:20px;border:3px solid #000;"></div>
<div style="position:absolute;left:1229px;top:679px;width:6px;height:6px;background:#000;border:1px solid #fff;"></div>
<div style="position:absolute;left:0px;top:982px;width:1004px;height:16px;background:linear-gradient(#8FAAD2 0px,#A9C0DF 5px,#A2BAD9 15px);"></div>
<div style="position:absolute;left:0px;top:982px;width:1004px;height:1px;background:#7D9CC8;"></div>
<div style="position:absolute;left:0px;top:982px;width:63px;height:16px;background:linear-gradient(#E3EDF9 0px,#D5E3F5 6px,#BCD1EC 8px,#CFDFF3 15px);border-top:1px solid #9CB6DA;border-right:1px solid #9CB6DA;"></div>
<svg style="left:0;top:982px" width="63" height="16"><g fill="#15428B"><rect x="6" y="4" width="1" height="8"/><path d="M12 4 L8 8 L12 12Z"/><path d="M25 4 L21 8 L25 12Z"/><path d="M36 4 L40 8 L36 12Z"/><path d="M50 4 L54 8 L50 12Z"/><rect x="55" y="4" width="1" height="8"/></g></svg>
<svg style="left:0;top:982px" width="400" height="17"><defs><linearGradient id="tg" x1="0" y1="0" x2="0" y2="1"><stop offset="0" stop-color="#E6EFFA"/><stop offset="0.45" stop-color="#D4E3F6"/><stop offset="0.55" stop-color="#C2D6F0"/><stop offset="1" stop-color="#D2E1F5"/></linearGradient></defs><path d="M216.5 16.5 L231.5 1.5 L264.5 1.5 L250.5 16.5 Z" fill="url(#tg)" stroke="#8DA9D0"/><path d="M163.5 16.5 L178.5 1.5 L230.5 1.5 L216.5 16.5 Z" fill="url(#tg)" stroke="#8DA9D0"/><path d="M110.5 16.5 L125.5 1.5 L177.5 1.5 L163.5 16.5 Z" fill="url(#tg)" stroke="#8DA9D0"/></svg>
<svg style="left:0;top:982px" width="400" height="17"><defs><linearGradient id="ta" x1="0" y1="0" x2="0" y2="1"><stop offset="0" stop-color="#F8FBFE"/><stop offset="0.7" stop-color="#F2F7FD"/><stop offset="1" stop-color="#D8E6F7"/></linearGradient></defs><path d="M63 0 L63 15.5 L110.5 15.5 L124 0 Z" fill="url(#ta)"/><path d="M110.5 15.5 L124.5 1" stroke="#9CB6DA" fill="none"/></svg>
<div style="position:absolute;left:72px;top:984px;font:bold 12.5px/14px 'Liberation Sans', sans-serif;color:#15428B;white-space:nowrap;">Лист1</div>
<div style="position:absolute;left:126px;top:984px;font:normal 12.5px/14px 'Liberation Sans', sans-serif;color:#15428B;white-space:nowrap;">Лист2</div>
<div style="position:absolute;left:179px;top:984px;font:normal 12.5px/14px 'Liberation Sans', sans-serif;color:#15428B;white-space:nowrap;">Лист3</div>
<svg style="left:232px;top:984px" width="18" height="14"><rect x="4" y="3" width="11" height="8" rx="1.5" fill="#E8EEF6" stroke="#7C8CA3"/><path d="M4.5 11 L6 13 L9 11" fill="#E8EEF6" stroke="#7C8CA3"/><circle cx="4" cy="3" r="2.6" fill="#FFC94A" stroke="#F08C00" stroke-width="0.8"/></svg>
<div style="position:absolute;left:998px;top:983px;width:6px;height:15px;background:#F4F8FC;border:1px solid #9AB0D0;"></div>
<div style="position:absolute;left:1004px;top:982px;width:660px;height:16px;background:#7898C4;border-top:1px solid #A8C4EA;"></div>
<svg style="left:1004px;top:982px" width="660" height="16"><path d="M12 4 L7 8.5 L12 13Z" fill="#2D4573"/><path d="M643 4 L648 8.5 L643 13Z" fill="#2D4573"/></svg>
<div style="position:absolute;left:1021px;top:983px;width:531px;height:15px;background:linear-gradient(#F0F2F6 0px,#E4E8EF 6px,#C9D3E1 8px,#B7C5D8 15px);border:1px solid #4C6A9A;border-radius:2px;"></div>
<div style="position:absolute;left:1282px;top:986px;width:7px;height:8px;background:repeating-linear-gradient(90deg,#6A6F78 0 1px,transparent 1px 2px);"></div>
<div style="position:absolute;left:1658px;top:983px;width:5px;height:15px;background:#F4F8FC;border:1px solid #9AB0D0;"></div>
<div style="position:absolute;left:1664px;top:982px;width:16px;height:16px;background:#7A9CD0;"></div>
<div style="position:absolute;left:1664px;top:169px;width:16px;height:813px;background:#7898C4;border-left:1px solid #A8C4EA;"></div>
<div style="position:absolute;left:1665px;top:170px;width:14px;height:5px;background:#F4F8FC;border:1px solid #9AB0D0;"></div>
<svg style="left:1664px;top:169px" width="16" height="813"><path d="M3.5 16.5 L8 12 L12.5 16.5Z" fill="#2D4573"/><path d="M3.5 801 L8 805.5 L12.5 801Z" fill="#2D4573"/></svg>
<div style="position:absolute;left:1665px;top:193px;width:15px;height:738px;background:linear-gradient(90deg,#F0F2F6 0px,#E4E8EF 6px,#C9D3E1 8px,#B7C5D8 15px);border:1px solid #4C6A9A;border-radius:2px;"></div>
<div style="position:absolute;left:1669px;top:558px;width:8px;height:7px;background:repeating-linear-gradient(#6A6F78 0 1px,transparent 1px 2px);"></div>
<div style="position:absolute;left:1665px;top:145px;width:14px;height:19px;background:linear-gradient(#FAFCFE,#DCE6F3 40%,#A9C3E5);"></div>
<svg style="left:1665px;top:145px" width="14" height="19"><path d="M3.5 5 L7 8 L10.5 5 M3.5 9 L7 12 L10.5 9" stroke="#000" stroke-width="1.4" fill="none"/></svg>
<div style="position:absolute;left:0px;top:998px;width:1680px;height:1px;background:#6E8FBD;"></div>
<div style="position:absolute;left:0px;top:999px;width:1680px;height:21px;background:linear-gradient(#F6FAFE 0px,#DAE8FA 2px,#C8DCF6 6px,#B9D1F1 9px,#C6DAF4 15px,#D4E5F8 21px);"></div>
<div style="position:absolute;left:52px;top:1000px;width:1px;height:19px;background:#9FB9DC;"></div>
<div style="position:absolute;left:53px;top:1000px;width:1px;height:19px;background:#F1F6FC;"></div>
<div style="position:absolute;left:7px;top:1003px;font:normal 12.2px/13px 'Liberation Sans', sans-serif;color:#15428B;white-space:nowrap;">Готово</div>
<div style="position:absolute;left:1434px;top:1000px;width:1px;height:19px;background:#9FB9DC;"></div>
<div style="position:absolute;left:1441px;top:1001px;width:56px;height:17px;background:linear-gradient(#E8F0FA,#C9DBF1);border:1px solid #A6BEDE;border-radius:2px;"></div>
<div style="position:absolute;left:1442px;top:1002px;width:19px;height:15px;background:linear-gradient(#FFF3C8,#FFD46E);"></div>
<svg style="left:1441px;top:1001px" width="56" height="17"><g fill="#fff" stroke="#5B6B80" stroke-width="1"><rect x="3.5" y="3.5" width="12" height="9"/></g><path d="M3.5 6.5 H15.5 M3.5 9.5 H15.5 M7.5 3.5 V12.5 M11.5 3.5 V12.5" stroke="#5B6B80"/><rect x="23.5" y="3.5" width="11" height="10" fill="#D7DCE3" stroke="#6F7C8E"/><rect x="26.5" y="5.5" width="5" height="6" fill="#fff" stroke="#6F7C8E"/><rect x="41.5" y="3.5" width="11" height="10" fill="#D7DCE3" stroke="#6F7C8E"/><rect x="43.5" y="4.5" width="2" height="5" fill="#fff"/><rect x="47.5" y="4.5" width="2" height="5" fill="#fff"/></svg>
<div style="position:absolute;left:1504px;top:1003px;font:normal 11.5px/13px 'Liberation Sans', sans-serif;color:#15428B;white-space:nowrap;">100%</div>
<svg style="left:1540px;top:999px" width="140" height="21"><line x1="16" y1="10.5" x2="119" y2="10.5" stroke="#8CA6CA"/><line x1="16" y1="11.5" x2="119" y2="11.5" stroke="#F6FAFE"/><circle cx="9" cy="10" r="7" fill="#EAF1FA" stroke="#5D7BA6"/><rect x="5" y="9" width="8" height="2.2" fill="#2A3F66"/><circle cx="127" cy="10" r="7" fill="#EAF1FA" stroke="#5D7BA6"/><rect x="123" y="9" width="8" height="2.2" fill="#2A3F66"/><rect x="126" y="6" width="2.2" height="8" fill="#2A3F66"/><path d="M63.5 3.5 H70.5 V12 L67 15.5 L63.5 12 Z" fill="#F2F5F9" stroke="#5D7BA6"/></svg>
<div style="position:absolute;left:0px;top:1020px;width:1680px;height:30px;background:linear-gradient(#3C81F3 0px,#2D6BE6 2px,#245DDB 5px,#245EDC 24px,#1F50C0 30px);"></div>
<div style="position:absolute;left:0px;top:1020px;width:1680px;height:1px;background:#2F6BE0;"></div>
<div style="position:absolute;left:0px;top:1020px;width:96px;height:30px;background:linear-gradient(#2F8A2F 0px,#7CC07C 2px,#58AE58 5px,#3C9C3C 10px,#45AA45 20px,#348C34 30px);border-radius:0 5px 5px 0 / 0 15px 15px 0;box-shadow:inset -3px 0 3px rgba(0,40,0,0.35);"></div>
<svg style="left:9px;top:1024px" width="22" height="22"><path d="M3 4 Q6 2 10 4 L9 10 Q5 8 2 10Z" fill="#F0522C"/><path d="M11 4 Q14 6 18 4 L17 10 Q13 12 10 10Z" fill="#6CC13C"/><path d="M2 11 Q5 9 9 11 L8 17 Q4 15 1 17Z" fill="#3A8BEA"/><path d="M10 11 Q13 13 17 11 L16 17 Q12 19 9 17Z" fill="#FFC52A"/></svg>
<div style="position:absolute;left:34px;top:1026px;font:bold 16.8px/20px 'Liberation Sans', sans-serif;color:#fff;white-space:nowrap;text-shadow:1px 1px 1px #1D4E1D;"><i>пуск</i></div>
<svg style="left:105px;top:1025px" width="90" height="22"><path d="M4 6 Q5 2 10 3 L16 2 L15 8 Q17 14 11 16 Q6 17 4 13 Q2 10 4 6Z" fill="#F4F0D8" stroke="#2B5BC8" stroke-width="1.2"/><path d="M6 10 Q8 6 12 6 L14 4" stroke="#3A7AE0" stroke-width="2" fill="none"/><circle cx="16" cy="5" r="1.5" fill="#F05A20"/><rect x="9" y="10" width="3" height="2" fill="#222"/><rect x="27" y="2" width="14" height="15" fill="#2A48C8" stroke="#1A2F8A"/><rect x="30" y="2.5" width="7" height="4.5" fill="#E8E8E8"/><rect x="34" y="3" width="2" height="3" fill="#2A48C8"/><rect x="29" y="9" width="10" height="7" fill="#fff"/><rect x="30" y="10.5" width="8" height="1.2" fill="#D02020"/><rect x="30" y="13" width="8" height="1.2" fill="#D02020"/><rect x="28" y="15" width="12" height="1.5" fill="#D02020"/><ellipse cx="54" cy="13" rx="5" ry="3" fill="#1B3F9E" opacity="0.6"/><ellipse cx="59" cy="10" rx="4.6" ry="6.8" fill="none" stroke="#D41818" stroke-width="2.6"/><path d="M77 2.5 L80 5 L77 7.5 M81 2.5 L84 5 L81 7.5" stroke="#A9C9F7" stroke-width="1.3" fill="none"/></svg>
<div style="position:absolute;left:198px;top:1022px;width:158px;height:25px;background:linear-gradient(#5A9BF8 0px,#3C81F3 2px,#3479EE 12px,#3173E6 25px);border:1px solid #2256C6;border-radius:3px;box-shadow:inset 1px 1px 0 rgba(255,255,255,0.25);"></div>
<svg style="left:206px;top:1027px" width="18" height="16"><path d="M1 3 H6 L8 5 H16 V14 H1Z" fill="#E7C04A" stroke="#9C7A1C"/><path d="M1 6 H16 V14 H1Z" fill="#F9DC73"/></svg>
<div style="position:absolute;left:227px;top:1028px;font:normal 11.2px/14px 'Liberation Sans', sans-serif;color:#fff;white-space:nowrap;">MALAMASH (G:)</div>
<div style="position:absolute;left:358px;top:1022px;width:158px;height:25px;background:linear-gradient(#5A9BF8 0px,#3C81F3 2px,#3479EE 12px,#3173E6 25px);border:1px solid #2256C6;border-radius:3px;box-shadow:inset 1px 1px 0 rgba(255,255,255,0.25);"></div>
<svg style="left:366px;top:1026px" width="18" height="18"><ellipse cx="9" cy="15" rx="7" ry="2" fill="#123A8A" opacity="0.6"/><circle cx="9" cy="8.5" r="6.8" fill="#D8E9FF" stroke="#2A62C8" stroke-width="0.8"/><circle cx="7" cy="6" r="3" fill="#fff" opacity="0.8"/><text x="2.5" y="11" font-family="Liberation Serif" font-size="9" font-weight="bold" fill="#22A033">T</text><text x="7.5" y="14" font-family="Liberation Serif" font-size="10" font-weight="bold" fill="#22A033">c</text></svg>
<div style="position:absolute;left:387px;top:1028px;font:normal 11.2px/14px 'Liberation Sans', sans-serif;color:#fff;white-space:nowrap;">Total Commander 7.0...</div>
<div style="position:absolute;left:518px;top:1022px;width:159px;height:25px;background:linear-gradient(#1A48AF 0px,#1E52BE 3px,#1E50BC 24px);border:1px solid #173E99;border-radius:3px;box-shadow:inset 1px 1px 2px rgba(0,0,0,0.35);"></div>
<svg style="left:526px;top:1026px" width="18" height="18"><path d="M5 2 H15 V14 H2.5 V4.5 Q2.5 2 5 2Z" fill="#9ED09A" stroke="#1E7F1E" stroke-width="1.2"/><path d="M6 7 H17 L16.5 16.5 H5.5Z" fill="#F6FBF2"/><path d="M8 8.5 L14 15" stroke="#2E7A10" stroke-width="2.4"/><path d="M14 9 L8 15" stroke="#7CC070" stroke-width="1.8"/></svg>
<div style="position:absolute;left:547px;top:1028px;font:normal 11.2px/14px 'Liberation Sans', sans-serif;color:#fff;white-space:nowrap;">Microsoft Excel - 5&nbsp;&nbsp;[P...</div>
<div style="position:absolute;left:678px;top:1022px;width:158px;height:25px;background:linear-gradient(#5A9BF8 0px,#3C81F3 2px,#3479EE 12px,#3173E6 25px);border:1px solid #2256C6;border-radius:3px;box-shadow:inset 1px 1px 0 rgba(255,255,255,0.25);"></div>
<svg style="left:686px;top:1026px" width="18" height="18"><rect x="3.5" y="1.5" width="12" height="15" fill="#fff" stroke="#555"/><rect x="1" y="4" width="9" height="9" fill="#2B56C6"/><text x="2" y="12" font-family="Liberation Sans" font-size="8" font-weight="bold" fill="#fff">W</text></svg>
<div style="position:absolute;left:707px;top:1028px;font:normal 11.2px/14px 'Liberation Sans', sans-serif;color:#fff;white-space:nowrap;">5 - Microsoft Word</div>
<div style="position:absolute;left:1487px;top:1020px;width:193px;height:30px;background:linear-gradient(#1BA2F2 0px,#0F93E8 3px,#0C8DE3 24px,#0B7BD0 30px);border-left:1px solid #1042AF;"></div>
<div style="position:absolute;left:1459px;top:1028px;width:16px;height:14px;background:#2A62D4;"></div>
<div style="position:absolute;left:1460px;top:1030px;font:normal 11px/12px 'Liberation Sans', sans-serif;color:#fff;white-space:nowrap;">RL</div>
<svg style="left:1478px;top:1024px" width="80" height="22"><circle cx="8.5" cy="11" r="8" fill="#3F9CF7" stroke="#C9E4FF" stroke-width="1.2"/><path d="M10.5 7 L7 11 L10.5 15" stroke="#fff" stroke-width="2" fill="none"/><rect x="18" y="3" width="15" height="16" fill="#F7931E" stroke="#C65D00"/><path d="M22 6 L29 11 L22 16Z" fill="#2B1A0A"/><path d="M35 4 L39 4 L39 11 L45 3 L49 3 L41 12 L46 19 L42 19 L39 14 L39 19 L35 19Z" fill="#F41C1C" stroke="#fff" stroke-width="0.6"/><path d="M42 12 L49 19 M46 19 H49 V16" stroke="#000" stroke-width="2" fill="none"/><rect x="57.5" y="3.5" width="9" height="8" fill="#6A68B8" stroke="#2A2A6A"/><rect x="53.5" y="8.5" width="9" height="8" fill="#8C8CD8" stroke="#2A2A6A"/><ellipse cx="57" cy="18" rx="4" ry="1.5" fill="#B0B0D8"/></svg>
<div style="position:absolute;left:1562px;top:1026px;font:normal 17px/18px 'Liberation Sans', sans-serif;color:#fff;white-space:nowrap;">18:24 Пн 27</div>
<svg style="left:0;top:0" width="200" height="26"><defs><linearGradient id="qat" x1="0" y1="0" x2="0" y2="1"><stop offset="0" stop-color="#E6EEF9"/><stop offset="0.5" stop-color="#D3E1F3"/><stop offset="1" stop-color="#C6D8F0"/></linearGradient></defs><path d="M36 2.5 H131 Q142.5 2.5 142.5 13 Q142.5 23.5 131 23.5 H46 Q45 8 36 2.5Z" fill="url(#qat)" stroke="#A7BFE2"/><rect x="52" y="6" width="13" height="13" fill="#3A4EB8" stroke="#24307A"/><rect x="55" y="6.5" width="7" height="5" fill="#fff"/><rect x="55" y="14" width="6" height="4.5" fill="#222"/><rect x="56" y="15" width="2" height="2" fill="#fff"/><path d="M77 12 Q77 7 82 7 Q86 7 86 12 Q86 16 82 17" stroke="#8FA3C0" stroke-width="2" fill="none"/><path d="M75 9 L78 13 L80 8Z" fill="#8FA3C0"/><path d="M93 12 L97 12 L95 14.5Z" fill="#8FA3C0"/><path d="M116 12 Q116 7 111 7 Q107 7 107 12 Q107 16 111 17" stroke="#8FA3C0" stroke-width="2" fill="none"/><path d="M118 9 L115 13 L113 8Z" fill="#8FA3C0"/><path d="M125 12 L129 12 L127 14.5Z" fill="#8FA3C0"/><rect x="149" y="9" width="7" height="1.2" fill="#22336B"/><path d="M149 11.5 L156 11.5 L152.5 15Z" fill="#22336B"/></svg>
<svg style="left:0;top:0" width="48" height="48"><defs><linearGradient id="ob" x1="0" y1="0" x2="0" y2="1"><stop offset="0" stop-color="#FDFEFF"/><stop offset="0.45" stop-color="#E6EBF2"/><stop offset="0.52" stop-color="#C9D2DE"/><stop offset="0.8" stop-color="#EEF2F7"/><stop offset="1" stop-color="#FFFFFF"/></linearGradient><linearGradient id="or" x1="0" y1="0" x2="1" y2="1"><stop offset="0" stop-color="#D92A0A"/><stop offset="1" stop-color="#FF9A1A"/></linearGradient><linearGradient id="oy" x1="0" y1="0" x2="1" y2="1"><stop offset="0" stop-color="#FFD24A"/><stop offset="1" stop-color="#F59A10"/></linearGradient><linearGradient id="og" x1="0" y1="0" x2="1" y2="1"><stop offset="0" stop-color="#8CD040"/><stop offset="1" stop-color="#2E8A22"/></linearGradient></defs><circle cx="21.3" cy="22.2" r="17.6" fill="url(#ob)" stroke="#7F8A9A" stroke-width="1.2"/><g fill="none" stroke-linecap="round" stroke-width="2.8"><path d="M21 18 V14.5 Q21 12.5 19 12.5 H13.5 Q11.5 12.5 11.5 14.5 V19.5 Q11.5 21.5 13.5 21.5 H16.5" stroke="url(#or)"/><path d="M24 19 V18.5 Q24 17 25.5 17 H27.5 Q29 17 29 18.5 V20.5 Q29 22 27.5 22 H27" stroke="#2A7EDC" stroke-width="2.2"/><path d="M17.5 25 H15 Q13 25 13 27 V31 Q13 33 15 33 H19 Q21 33 21 31 V29.5" stroke="url(#oy)"/><path d="M27.5 25 H29 Q31 25 31 27 V30.5 Q31 32.5 29 32.5 H26 Q24 32.5 24 30.5 V29" stroke="url(#og)"/></g><circle cx="20.5" cy="21.3" r="1.1" fill="#F05A10"/><circle cx="24.8" cy="21.3" r="1.1" fill="#2A7EDC"/><circle cx="20.5" cy="25.6" r="1.1" fill="#FFC030"/><circle cx="24.8" cy="25.6" r="1.1" fill="#5AB030"/></svg>
<svg style="left:1600px;top:0" width="80" height="26"><rect x="12" y="14" width="8" height="2.4" fill="#3C5A86"/><rect x="39.5" y="8.5" width="7" height="5" fill="none" stroke="#587AA8"/><rect x="37.5" y="10.5" width="7" height="6" fill="#E6EEF9" stroke="#587AA8"/><rect x="37.5" y="10.5" width="7" height="1.6" fill="#587AA8"/><path d="M63 9 L70 17 M70 9 L63 17" stroke="#587AA8" stroke-width="2.2"/></svg>
<svg style="left:1590px;top:26px" width="90" height="24"><circle cx="13" cy="12.5" r="6.8" fill="#2A5ED0" stroke="#EAF2FF" stroke-width="1.2"/><circle cx="13" cy="12.5" r="7.6" fill="none" stroke="#5C7FB8" stroke-width="0.8"/><text x="9.5" y="16.5" font-family="Liberation Sans" font-size="11" font-weight="bold" fill="#fff">?</text><rect x="31" y="14" width="7" height="2.2" fill="#5E6A78"/><rect x="54.5" y="7.5" width="7" height="5" fill="none" stroke="#6E7A88"/><rect x="52.5" y="9.5" width="7" height="6" fill="#C9DFFB" stroke="#6E7A88"/><rect x="52.5" y="9.5" width="7" height="1.6" fill="#6E7A88"/><path d="M76 9 L83 16 M83 9 L76 16" stroke="#6E7A88" stroke-width="2"/></svg>
<div style="position:absolute;left:1145px;top:0px;width:250px;height:21px;background:linear-gradient(#CFCFCF,#B9B9B9);border:1px solid #8E8E8E;border-top:none;border-radius:0 0 4px 4px"></div>
<svg style="left:1145px;top:0px" width="250" height="21"><rect x="4.5" y="3.5" width="12" height="13" rx="2.5" fill="#6F6F6F" stroke="#4A4A4A"/><rect x="20.5" y="3.5" width="12" height="13" rx="2.5" fill="#6F6F6F" stroke="#4A4A4A"/><rect x="36.5" y="3.5" width="12" height="13" rx="2.5" fill="#6F6F6F" stroke="#4A4A4A"/><rect x="52.5" y="3.5" width="12" height="13" rx="2.5" fill="#6F6F6F" stroke="#4A4A4A"/><rect x="68.5" y="3.5" width="12" height="13" rx="2.5" fill="#6F6F6F" stroke="#4A4A4A"/><path d="M8 7 L13 10 L8 13Z" fill="#3A3A3A"/><rect x="24" y="7" width="2" height="6" fill="#3A3A3A"/><rect x="28" y="7" width="2" height="6" fill="#3A3A3A"/><rect x="40" y="7" width="5" height="6" fill="#3A3A3A"/><rect x="55" y="7" width="1.5" height="6" fill="#3A3A3A"/><path d="M61 7 L57 10 L61 13Z" fill="#3A3A3A"/><path d="M71 7 L75 10 L71 13Z" fill="#3A3A3A"/><rect x="76" y="7" width="1.5" height="6" fill="#3A3A3A"/><rect x="84.5" y="3.5" width="72" height="13" rx="3" fill="#F47A22" stroke="#C55A0A"/><path d="M92 6 V14 M94 6 V14" stroke="#3A1A00" stroke-width="1"/><path d="M96 7 H120 M96 10 H120 M96 13 H120" stroke="#D8651A" stroke-dasharray="1 1"/><text x="124" y="14" font-family="Liberation Mono" font-size="9.5" font-weight="bold" fill="#3A1A00">01:20</text><text x="162" y="8" font-family="Liberation Sans" font-size="6" fill="#E2E2E2">VOLUME</text><rect x="162" y="12" width="44" height="3" rx="1" fill="#F5A300"/><rect x="200" y="10" width="12" height="7" rx="2" fill="#EDEDED" stroke="#8A8A8A"/><rect x="221.5" y="4.5" width="12" height="12" rx="2.5" fill="#6F6F6F" stroke="#4A4A4A"/><path d="M224 10 L227.5 7 L231 10Z M224 12 H231" fill="#2A2A2A" stroke="#2A2A2A" stroke-width="0.8"/><rect x="237.5" y="3.5" width="9" height="9" rx="1.5" fill="#F47A22" stroke="#C55A0A"/><path d="M240 6 H244 V10" stroke="#fff" fill="none"/></svg>
<div style="position:absolute;left:62px;top:148px;font:normal 13px/14px 'Liberation Sans', sans-serif;color:#000;white-space:nowrap;">I29</div>
<svg style="left:143px;top:151px" width="12" height="8"><path d="M1 1.5 L10 1.5 L5.5 6.5Z" fill="#000"/></svg>
<svg style="left:158px;top:143px" width="88" height="22"><defs><linearGradient id="fxg" x1="0" y1="0" x2="0" y2="1"><stop offset="0" stop-color="#F3F6FB"/><stop offset="0.5" stop-color="#D2DFF1"/><stop offset="1" stop-color="#A9C1E3"/></linearGradient><radialGradient id="ball" cx="0.4" cy="0.35" r="0.7"><stop offset="0" stop-color="#fff"/><stop offset="1" stop-color="#8A8F96"/></radialGradient></defs><path d="M86 1 H12 Q1 1 1 11 Q1 21 12 21 H86 Z" fill="url(#fxg)" stroke="#7FA0CE"/><circle cx="11" cy="11" r="4" fill="url(#ball)"/><text x="66" y="15.5" font-family="Liberation Serif" font-size="14" font-style="italic" font-weight="bold" fill="#3A3F4A">f</text><text x="72" y="16" font-family="Liberation Serif" font-size="11" font-style="italic" fill="#3A3F4A">x</text></svg>
<div style="position:absolute;left:1px;top:169px;width:24px;height:16px;background:#A7BDDF;border:1px solid #C3D2E8"></div>
<svg style="left:12px;top:173px" width="12" height="10"><path d="M9 1 L9 9 L1 9Z" fill="#F6F9FD"/></svg>
</body></html>
